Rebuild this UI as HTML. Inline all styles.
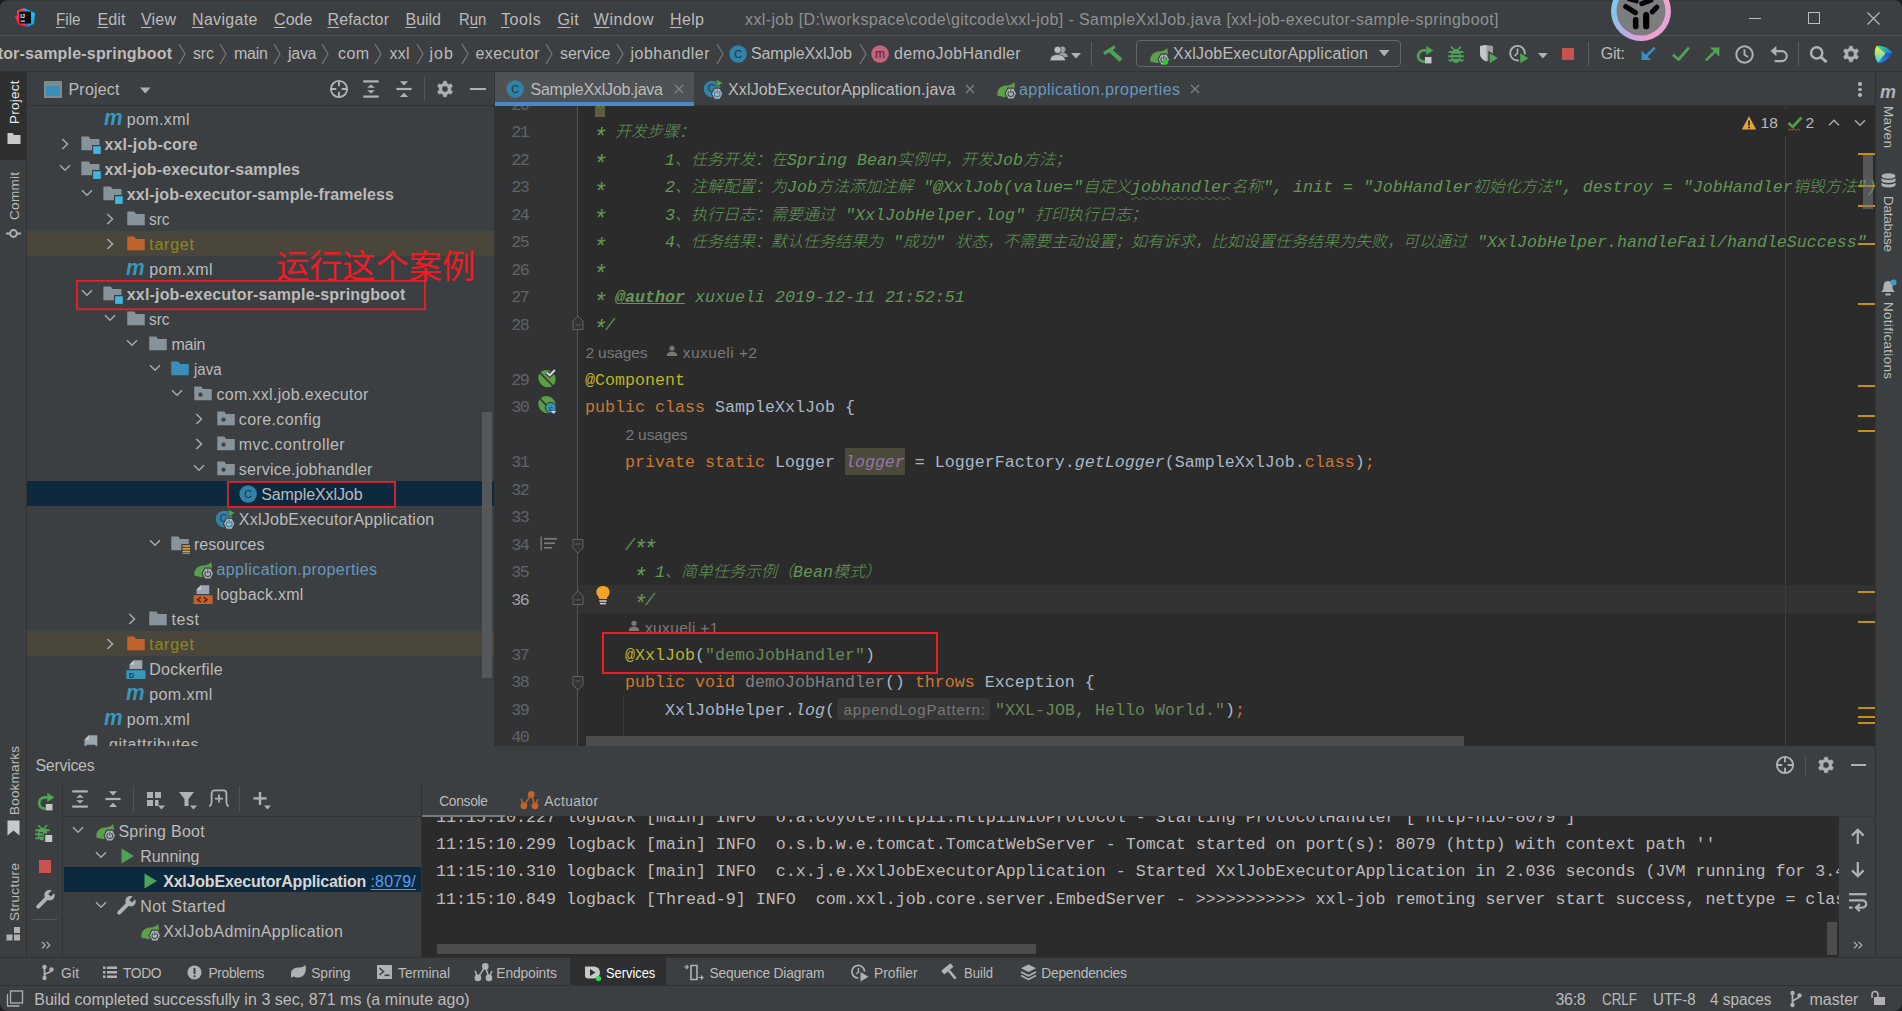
<!DOCTYPE html>
<html lang="en"><head><meta charset="utf-8"><title>xxl-job – SampleXxlJob.java</title>
<style>
html,body{margin:0;padding:0;background:#3c3f41;}
body{width:1902px;height:1011px;position:relative;overflow:hidden;}
body div,body svg,body span.u,body span.m{position:absolute;}
body svg{overflow:visible;}
span.a{display:inline-block;position:relative;top:5.2px;transform:scale(1.38);}
span.u{font-family:"Liberation Sans","Noto Sans CJK SC",sans-serif;white-space:pre;}
span.m{font-family:"Liberation Mono","Noto Sans CJK SC",monospace;white-space:pre;}
span.cj{font-size:16px;font-weight:300;}
.clip{overflow:hidden;}
</style></head>
<body>
<div style="left:495px;top:106px;width:1380px;height:640px;background:#2b2b2b;"></div>
<div style="left:495px;top:106px;width:82px;height:640px;background:#313335;"></div>
<div style="left:577px;top:106px;width:1px;height:640px;background:#555555;"></div>
<div style="left:578px;top:585px;width:1297px;height:27.5px;background:#323232;"></div>
<div style="left:495px;top:585px;width:82px;height:27.5px;background:#313335;"></div>
<div style="left:1785px;top:136px;width:1px;height:610px;background:#3e3e3e;"></div>
<div style="left:1785px;top:106px;width:1px;height:3px;background:#3e3e3e;"></div>
<div style="left:623px;top:695px;width:1px;height:51px;background:#3b3b3b;"></div>
<div style="left:595px;top:90px;width:10px;height:27px;background:#5e5b3e;"></div>
<span class="m" style="left:511.2px;top:91.86px;font-size:16.67px;line-height:27px;color:#606366;letter-spacing:-1.5px;">20</span>
<span class="m" style="left:585px;top:91.86px;font-size:16.67px;line-height:27px;color:#a9b7c6;"><span style="color:#629755;font-style:italic;"> <span class="a">*</span></span></span>
<span class="m" style="left:511.2px;top:119.36px;font-size:16.67px;line-height:27px;color:#606366;letter-spacing:-1.5px;">21</span>
<span class="m" style="left:585px;top:119.36px;font-size:16.67px;line-height:27px;color:#a9b7c6;"><span style="color:#629755;font-style:italic;"> <span class="a">*</span> <span class="cj">开发步骤：</span></span></span>
<span class="m" style="left:511.2px;top:146.86px;font-size:16.67px;line-height:27px;color:#606366;letter-spacing:-1.5px;">22</span>
<span class="m" style="left:585px;top:146.86px;font-size:16.67px;line-height:27px;color:#a9b7c6;"><span style="color:#629755;font-style:italic;"> <span class="a">*</span>      1<span class="cj">、任务开发：在</span>Spring Bean<span class="cj">实例中，开发</span>Job<span class="cj">方法；</span></span></span>
<span class="m" style="left:511.2px;top:174.36px;font-size:16.67px;line-height:27px;color:#606366;letter-spacing:-1.5px;">23</span>
<span class="m" style="left:585px;top:174.36px;font-size:16.67px;line-height:27px;color:#a9b7c6;"><span style="color:#629755;font-style:italic;"> <span class="a">*</span>      2<span class="cj">、注解配置：为</span>Job<span class="cj">方法添加注解</span> "@XxlJob(value="<span class="cj">自定义</span></span><span style="color:#629755;font-style:italic;text-decoration:underline wavy #56704d 1px;text-underline-offset:4px;">jobhandler</span><span style="color:#629755;font-style:italic;"><span class="cj">名称</span>", init = "JobHandler<span class="cj">初始化方法</span>", destroy = "JobHandler<span class="cj">销毁方法</span>")</span></span>
<span class="m" style="left:511.2px;top:201.86px;font-size:16.67px;line-height:27px;color:#606366;letter-spacing:-1.5px;">24</span>
<span class="m" style="left:585px;top:201.86px;font-size:16.67px;line-height:27px;color:#a9b7c6;"><span style="color:#629755;font-style:italic;"> <span class="a">*</span>      3<span class="cj">、执行日志：需要通过</span> "XxlJobHelper.log" <span class="cj">打印执行日志；</span></span></span>
<span class="m" style="left:511.2px;top:229.36px;font-size:16.67px;line-height:27px;color:#606366;letter-spacing:-1.5px;">25</span>
<span class="m" style="left:585px;top:229.36px;font-size:16.67px;line-height:27px;color:#a9b7c6;"><span style="color:#629755;font-style:italic;"> <span class="a">*</span>      4<span class="cj">、任务结果：默认任务结果为</span> "<span class="cj">成功</span>" <span class="cj">状态，不需要主动设置；如有诉求，比如设置任务结果为失败，可以通过</span> "XxlJobHelper.handleFail/handleSuccess"</span></span>
<span class="m" style="left:511.2px;top:256.86px;font-size:16.67px;line-height:27px;color:#606366;letter-spacing:-1.5px;">26</span>
<span class="m" style="left:585px;top:256.86px;font-size:16.67px;line-height:27px;color:#a9b7c6;"><span style="color:#629755;font-style:italic;"> <span class="a">*</span></span></span>
<span class="m" style="left:511.2px;top:284.36px;font-size:16.67px;line-height:27px;color:#606366;letter-spacing:-1.5px;">27</span>
<span class="m" style="left:585px;top:284.36px;font-size:16.67px;line-height:27px;color:#a9b7c6;"><span style="color:#629755;font-style:italic;"> <span class="a">*</span> </span><span style="color:#629755;font-style:italic;font-weight:bold;text-decoration:underline;">@author</span><span style="color:#629755;font-style:italic;"> xuxueli 2019-12-11 21:52:51</span></span>
<span class="m" style="left:511.2px;top:311.86px;font-size:16.67px;line-height:27px;color:#606366;letter-spacing:-1.5px;">28</span>
<span class="m" style="left:585px;top:311.86px;font-size:16.67px;line-height:27px;color:#a9b7c6;"><span style="color:#629755;font-style:italic;"> <span class="a">*</span>/</span></span>
<span class="m" style="left:511.2px;top:366.86px;font-size:16.67px;line-height:27px;color:#606366;letter-spacing:-1.5px;">29</span>
<span class="m" style="left:585px;top:366.86px;font-size:16.67px;line-height:27px;color:#a9b7c6;"><span style="color:#bbb529;">@Component</span></span>
<span class="m" style="left:511.2px;top:394.36px;font-size:16.67px;line-height:27px;color:#606366;letter-spacing:-1.5px;">30</span>
<span class="m" style="left:585px;top:394.36px;font-size:16.67px;line-height:27px;color:#a9b7c6;"><span style="color:#cc7832;">public class </span><span style="color:#a9b7c6;">SampleXxlJob {</span></span>
<div style="left:845px;top:447.5px;width:60px;height:27.5px;background:#4b4a3b;"></div>
<span class="m" style="left:511.2px;top:449.36px;font-size:16.67px;line-height:27px;color:#606366;letter-spacing:-1.5px;">31</span>
<span class="m" style="left:585px;top:449.36px;font-size:16.67px;line-height:27px;color:#a9b7c6;"><span style="color:#cc7832;">    private static </span><span style="color:#a9b7c6;">Logger </span><span style="color:#9876aa;font-style:italic;">logger</span><span style="color:#a9b7c6;"> = LoggerFactory.</span><span style="color:#a9b7c6;font-style:italic;">getLogger</span><span style="color:#a9b7c6;">(SampleXxlJob.</span><span style="color:#cc7832;">class</span><span style="color:#a9b7c6;">)</span><span style="color:#cc7832;">;</span></span>
<span class="m" style="left:511.2px;top:476.86px;font-size:16.67px;line-height:27px;color:#606366;letter-spacing:-1.5px;">32</span>
<span class="m" style="left:511.2px;top:504.36px;font-size:16.67px;line-height:27px;color:#606366;letter-spacing:-1.5px;">33</span>
<span class="m" style="left:511.2px;top:531.86px;font-size:16.67px;line-height:27px;color:#606366;letter-spacing:-1.5px;">34</span>
<span class="m" style="left:585px;top:531.86px;font-size:16.67px;line-height:27px;color:#a9b7c6;"><span style="color:#629755;font-style:italic;">    /<span class="a">*</span><span class="a">*</span></span></span>
<span class="m" style="left:511.2px;top:559.36px;font-size:16.67px;line-height:27px;color:#606366;letter-spacing:-1.5px;">35</span>
<span class="m" style="left:585px;top:559.36px;font-size:16.67px;line-height:27px;color:#a9b7c6;"><span style="color:#629755;font-style:italic;">     <span class="a">*</span> 1<span class="cj">、简单任务示例（</span>Bean<span class="cj">模式）</span></span></span>
<span class="m" style="left:511.2px;top:586.86px;font-size:16.67px;line-height:27px;color:#a4a3a3;letter-spacing:-1.5px;">36</span>
<span class="m" style="left:585px;top:586.86px;font-size:16.67px;line-height:27px;color:#a9b7c6;"><span style="color:#629755;font-style:italic;">     <span class="a">*</span>/</span></span>
<span class="u" style="left:585.4px;top:342.83px;font-size:15.5px;line-height:20px;color:#787878;letter-spacing:-0.103px;">2 usages</span>
<svg style="left:666px;top:344.5px;" width="12" height="12" viewBox="0 0 12 12"><circle cx="6" cy="3.3" r="2.6" fill="#787878"/><path d="M0.8 11 C0.8 7.8 3 6.8 6 6.8 C9 6.8 11.2 7.8 11.2 11 Z" fill="#787878"/></svg>
<span class="u" style="left:682.8px;top:342.83px;font-size:15.5px;line-height:20px;color:#787878;letter-spacing:0.441px;">xuxueli +2</span>
<span class="u" style="left:625.4px;top:425.33px;font-size:15.5px;line-height:20px;color:#787878;letter-spacing:-0.103px;">2 usages</span>
<svg style="left:627.5px;top:619.5px;" width="12" height="12" viewBox="0 0 12 12"><circle cx="6" cy="3.3" r="2.6" fill="#787878"/><path d="M0.8 11 C0.8 7.8 3 6.8 6 6.8 C9 6.8 11.2 7.8 11.2 11 Z" fill="#787878"/></svg>
<span class="u" style="left:645px;top:617.83px;font-size:15.5px;line-height:20px;color:#787878;letter-spacing:0.352px;">xuxueli +1</span>
<svg style="left:602px;top:632px;" width="336" height="42" viewBox="0 0 336 42"><rect x="1.0" y="1.0" width="334" height="40" fill="#2b2b2b" stroke="#ee1c25" stroke-width="2"/></svg>
<span class="m" style="left:511.2px;top:641.86px;font-size:16.67px;line-height:27px;color:#606366;letter-spacing:-1.5px;">37</span>
<span class="m" style="left:585px;top:641.86px;font-size:16.67px;line-height:27px;color:#a9b7c6;"><span style="color:#a9b7c6;">    </span><span style="color:#bbb529;">@XxlJob</span><span style="color:#a9b7c6;">(</span><span style="color:#6a8759;">"demoJobHandler"</span><span style="color:#a9b7c6;">)</span></span>
<span class="m" style="left:511.2px;top:669.36px;font-size:16.67px;line-height:27px;color:#606366;letter-spacing:-1.5px;">38</span>
<span class="m" style="left:585px;top:669.36px;font-size:16.67px;line-height:27px;color:#a9b7c6;"><span style="color:#cc7832;">    public void </span><span style="color:#808080;">demoJobHandler</span><span style="color:#a9b7c6;">() </span><span style="color:#cc7832;">throws </span><span style="color:#a9b7c6;">Exception {</span></span>
<span class="m" style="left:511.2px;top:696.86px;font-size:16.67px;line-height:27px;color:#606366;letter-spacing:-1.5px;">39</span>
<span class="m" style="left:585px;top:696.86px;font-size:16.67px;line-height:27px;color:#a9b7c6;"><span style="color:#a9b7c6;">        XxlJobHelper.</span><span style="color:#a9b7c6;font-style:italic;">log</span><span style="color:#a9b7c6;">(</span></span>
<div style="left:837px;top:698px;width:153px;height:22px;background:#373737;border-radius:4px;"></div>
<span class="u" style="left:843.5px;top:699.60px;font-size:15px;line-height:20px;color:#787878;letter-spacing:0.867px;">appendLogPattern:</span>
<span class="m" style="left:995px;top:696.86px;font-size:16.67px;line-height:27px;color:#a9b7c6;"><span style="color:#6a8759">"XXL-JOB, Hello World."</span>)<span style="color:#cc7832">;</span></span>
<span class="m" style="left:511.2px;top:724.36px;font-size:16.67px;line-height:27px;color:#606366;letter-spacing:-1.5px;">40</span>
<svg style="left:571.5px;top:315px;" width="12" height="16" viewBox="0 0 12 16"><path d="M6 1 L11 6 V14.5 H1 V6 Z" fill="#313335" stroke="#606366" stroke-width="1"/><path d="M3.5 10 H8.5" stroke="#606366" stroke-width="1"/></svg>
<svg style="left:571.5px;top:537.5px;" width="12" height="16" viewBox="0 0 12 16"><path d="M1 1.5 H11 V10 L6 15 L1 10 Z" fill="#313335" stroke="#606366" stroke-width="1"/><path d="M3.5 6 H8.5" stroke="#606366" stroke-width="1"/></svg>
<svg style="left:571.5px;top:589.5px;" width="12" height="16" viewBox="0 0 12 16"><path d="M6 1 L11 6 V14.5 H1 V6 Z" fill="#313335" stroke="#606366" stroke-width="1"/><path d="M3.5 10 H8.5" stroke="#606366" stroke-width="1"/></svg>
<svg style="left:571.5px;top:674.5px;" width="12" height="16" viewBox="0 0 12 16"><path d="M1 1.5 H11 V10 L6 15 L1 10 Z" fill="#313335" stroke="#606366" stroke-width="1"/><path d="M3.5 6 H8.5" stroke="#606366" stroke-width="1"/></svg>
<svg style="left:537px;top:368px;" width="20" height="20" viewBox="0 0 16 16"><ellipse cx="8" cy="8.5" rx="7.2" ry="6.6" transform="rotate(40 8 8.5)" fill="#5b9e45"/><path d="M2.2 3.6 L12.6 14.2" fill="none" stroke="#313335" stroke-width="1.4"/><path d="M7.8 3.6 L10.2 5.8 L14.3 1.6" fill="none" stroke="#313335" stroke-width="3.4"/><path d="M7.8 3.6 L10.2 5.8 L14.3 1.6" fill="none" stroke="#c9d6de" stroke-width="1.7"/></svg>
<svg style="left:537px;top:394.2px;" width="20" height="20" viewBox="0 0 16 16"><ellipse cx="8" cy="8.5" rx="7.2" ry="6.6" transform="rotate(40 8 8.5)" fill="#5b9e45"/><path d="M2.2 3.6 L12.6 14.2" fill="none" stroke="#313335" stroke-width="1.4"/><circle cx="11" cy="11" r="4.3" fill="#3a8fb5" stroke="#313335" stroke-width="0.8"/><text x="11" y="13.2" font-family="Liberation Sans,sans-serif" font-size="6.5" text-anchor="middle" fill="#1e3a49">c</text><path d="M11 13.5 h4.5 l-2.25 2.5 z" fill="#d0d0d0"/></svg>
<svg style="left:540px;top:536px;" width="18" height="16" viewBox="0 0 18 16"><rect x="0.5" y="0.5" width="1.3" height="14" fill="#7a7e80"/><g fill="#7a7e80"><rect x="4" y="2" width="13" height="1.6"/><rect x="4" y="6.5" width="11" height="1.6"/><rect x="4" y="11" width="8" height="1.6"/></g></svg>
<svg style="left:595px;top:585px;" width="16" height="21" viewBox="0 0 16 21"><path d="M8 1 C4 1 1.4 3.8 1.4 7.2 C1.4 9.6 2.8 11 4 12.6 V14 H12 V12.6 C13.2 11 14.6 9.6 14.6 7.2 C14.6 3.8 12 1 8 1 Z" fill="#f2a52a"/><rect x="4.3" y="15.2" width="7.4" height="1.6" fill="#c8c8c8"/><rect x="5" y="17.8" width="6" height="1.6" fill="#c8c8c8"/></svg>
<div style="left:586px;top:736px;width:878px;height:10px;background:#4c4c4c;"></div>
<svg style="left:1741px;top:115px;" width="16" height="16" viewBox="0 0 16 16"><path d="M8 1.2 L15.2 14.5 H0.8 Z" fill="#e2a53a"/><rect x="7.1" y="5.5" width="1.8" height="5" fill="#2b2b2b"/><rect x="7.1" y="11.5" width="1.8" height="1.8" fill="#2b2b2b"/></svg>
<span class="u" style="left:1760.5px;top:113.13px;font-size:15.5px;line-height:20px;color:#bbbbbb;letter-spacing:0.050px;">18</span>
<svg style="left:1787px;top:115px;" width="16" height="18" viewBox="0 0 16 18"><path d="M1.5 8 L5.8 12 L14.5 2.5" fill="none" stroke="#4d9f4a" stroke-width="2.6"/><path d="M1 15.5 l2 -1.6 l2 1.6 l2 -1.6 l2 1.6 l2 -1.6 l2 1.6" fill="none" stroke="#c7403a" stroke-width="1"/></svg>
<span class="u" style="left:1805.5px;top:113.13px;font-size:15.5px;line-height:20px;color:#bbbbbb;">2</span>
<svg style="left:1827.4px;top:117.6px;" width="14" height="10" viewBox="0 0 14 10"><path d="M2 7.3 L7 2.3 L12 7.3" fill="none" stroke="#a8aaac" stroke-width="1.5"/></svg>
<svg style="left:1853.4px;top:117.6px;" width="14" height="10" viewBox="0 0 14 10"><path d="M2 2.3 L7 7.3 L12 2.3" fill="none" stroke="#a8aaac" stroke-width="1.5"/></svg>
<div style="left:1858px;top:153px;width:17px;height:2px;background:#c29217;"></div>
<div style="left:1858px;top:184.5px;width:17px;height:2px;background:#c29217;"></div>
<div style="left:1858px;top:205px;width:17px;height:2px;background:#c29217;"></div>
<div style="left:1858px;top:243px;width:17px;height:2px;background:#c29217;"></div>
<div style="left:1858px;top:303px;width:17px;height:2px;background:#c29217;"></div>
<div style="left:1858px;top:385px;width:17px;height:2px;background:#c29217;"></div>
<div style="left:1858px;top:415px;width:17px;height:2px;background:#c29217;"></div>
<div style="left:1858px;top:429.5px;width:17px;height:2px;background:#c29217;"></div>
<div style="left:1858px;top:590.5px;width:17px;height:2px;background:#c29217;"></div>
<div style="left:1858px;top:620.5px;width:17px;height:2px;background:#c29217;"></div>
<div style="left:1858px;top:706.5px;width:17px;height:2px;background:#c29217;"></div>
<div style="left:1858px;top:716px;width:17px;height:2px;background:#c29217;"></div>
<div style="left:1858px;top:721.5px;width:17px;height:2px;background:#c29217;"></div>
<div style="left:1863px;top:155px;width:10px;height:54px;background:rgba(120,123,125,0.55);"></div>
<div style="left:27px;top:106px;width:467px;height:640px;background:#3c3f41;"></div>
<div style="left:494px;top:72px;width:1px;height:674px;background:#323232;"></div>
<div style="left:27px;top:231px;width:467px;height:25px;background:#4a4639;"></div>
<div style="left:27px;top:631px;width:467px;height:25px;background:#4a4639;"></div>
<div style="left:27px;top:481px;width:467px;height:25px;background:#0d293e;"></div>
<svg style="left:103.8px;top:108.5px;" width="22" height="20" viewBox="0 0 22 20"><text x="0" y="16.4" font-family="Liberation Sans,sans-serif" font-size="22" font-weight="bold" font-style="italic" fill="#3a97ba" textLength="18.6" lengthAdjust="spacingAndGlyphs">m</text></svg>
<span class="u" style="left:126.8px;top:110.16px;font-size:16px;line-height:20px;color:#bbbbbb;letter-spacing:0.374px;">pom.xml</span>
<svg style="left:59.8px;top:136.5px;" width="10" height="14" viewBox="0 0 10 14"><path d="M2.3 2 L7.5 7 L2.3 12" fill="none" stroke="#a8aaac" stroke-width="1.5"/></svg>
<svg style="left:80.80000000000001px;top:133.9px;" width="20" height="20" viewBox="0 0 16 16"><path d="M0.3 2 H6.2 L7.6 4 H14.8 V8.8 H8.8 V13 H0.3 Z" fill="#87939a"/><rect x="9.7" y="9.8" width="6.1" height="6.1" fill="#40b6e0"/></svg>
<span class="u" style="left:104.4px;top:135.16px;font-size:16px;line-height:20px;color:#bbbbbb;font-weight:bold;letter-spacing:0.210px;">xxl-job-core</span>
<svg style="left:57.99999999999999px;top:163.1px;" width="14" height="10" viewBox="0 0 14 10"><path d="M2 2.3 L7 7.3 L12 2.3" fill="none" stroke="#a8aaac" stroke-width="1.5"/></svg>
<svg style="left:80.80000000000001px;top:158.9px;" width="20" height="20" viewBox="0 0 16 16"><path d="M0.3 2 H6.2 L7.6 4 H14.8 V8.8 H8.8 V13 H0.3 Z" fill="#87939a"/><rect x="9.7" y="9.8" width="6.1" height="6.1" fill="#40b6e0"/></svg>
<span class="u" style="left:104.4px;top:160.16px;font-size:16px;line-height:20px;color:#bbbbbb;font-weight:bold;letter-spacing:0.115px;">xxl-job-executor-samples</span>
<svg style="left:80.4px;top:188.1px;" width="14" height="10" viewBox="0 0 14 10"><path d="M2 2.3 L7 7.3 L12 2.3" fill="none" stroke="#a8aaac" stroke-width="1.5"/></svg>
<svg style="left:103.2px;top:183.9px;" width="20" height="20" viewBox="0 0 16 16"><path d="M0.3 2 H6.2 L7.6 4 H14.8 V8.8 H8.8 V13 H0.3 Z" fill="#87939a"/><rect x="9.7" y="9.8" width="6.1" height="6.1" fill="#40b6e0"/></svg>
<span class="u" style="left:126.8px;top:185.16px;font-size:16px;line-height:20px;color:#bbbbbb;font-weight:bold;letter-spacing:0.097px;">xxl-job-executor-sample-frameless</span>
<svg style="left:104.6px;top:211.5px;" width="10" height="14" viewBox="0 0 10 14"><path d="M2.3 2 L7.5 7 L2.3 12" fill="none" stroke="#a8aaac" stroke-width="1.5"/></svg>
<svg style="left:125.6px;top:208.9px;" width="20" height="20" viewBox="0 0 16 16"><path d="M1 2 H6.6 L8 4 H15 V13 H1 Z" fill="#87939a"/></svg>
<span class="u" style="left:149.2px;top:210.16px;font-size:16px;line-height:20px;color:#bbbbbb;transform:scaleX(0.9612);transform-origin:0 0;">src</span>
<svg style="left:104.6px;top:236.5px;" width="10" height="14" viewBox="0 0 10 14"><path d="M2.3 2 L7.5 7 L2.3 12" fill="none" stroke="#a8aaac" stroke-width="1.5"/></svg>
<svg style="left:125.6px;top:233.9px;" width="20" height="20" viewBox="0 0 16 16"><path d="M1 2 H6.6 L8 4 H15 V13 H1 Z" fill="#c2632e"/></svg>
<span class="u" style="left:149.2px;top:235.16px;font-size:16px;line-height:20px;color:#8a8a1c;letter-spacing:0.776px;">target</span>
<svg style="left:126.19999999999999px;top:258.5px;" width="22" height="20" viewBox="0 0 22 20"><text x="0" y="16.4" font-family="Liberation Sans,sans-serif" font-size="22" font-weight="bold" font-style="italic" fill="#3a97ba" textLength="18.6" lengthAdjust="spacingAndGlyphs">m</text></svg>
<span class="u" style="left:149.2px;top:260.16px;font-size:16px;line-height:20px;color:#bbbbbb;letter-spacing:0.491px;">pom.xml</span>
<svg style="left:80.4px;top:288.1px;" width="14" height="10" viewBox="0 0 14 10"><path d="M2 2.3 L7 7.3 L12 2.3" fill="none" stroke="#a8aaac" stroke-width="1.5"/></svg>
<svg style="left:103.2px;top:283.9px;" width="20" height="20" viewBox="0 0 16 16"><path d="M0.3 2 H6.2 L7.6 4 H14.8 V8.8 H8.8 V13 H0.3 Z" fill="#87939a"/><rect x="9.7" y="9.8" width="6.1" height="6.1" fill="#40b6e0"/></svg>
<span class="u" style="left:126.8px;top:285.16px;font-size:16px;line-height:20px;color:#bbbbbb;font-weight:bold;letter-spacing:0.169px;">xxl-job-executor-sample-springboot</span>
<svg style="left:102.8px;top:313.1px;" width="14" height="10" viewBox="0 0 14 10"><path d="M2 2.3 L7 7.3 L12 2.3" fill="none" stroke="#a8aaac" stroke-width="1.5"/></svg>
<svg style="left:125.6px;top:308.9px;" width="20" height="20" viewBox="0 0 16 16"><path d="M1 2 H6.6 L8 4 H15 V13 H1 Z" fill="#87939a"/></svg>
<span class="u" style="left:149.2px;top:310.16px;font-size:16px;line-height:20px;color:#bbbbbb;transform:scaleX(0.9612);transform-origin:0 0;">src</span>
<svg style="left:125.20000000000002px;top:338.1px;" width="14" height="10" viewBox="0 0 14 10"><path d="M2 2.3 L7 7.3 L12 2.3" fill="none" stroke="#a8aaac" stroke-width="1.5"/></svg>
<svg style="left:148.0px;top:333.9px;" width="20" height="20" viewBox="0 0 16 16"><path d="M1 2 H6.6 L8 4 H15 V13 H1 Z" fill="#87939a"/></svg>
<span class="u" style="left:171.6px;top:335.16px;font-size:16px;line-height:20px;color:#bbbbbb;letter-spacing:-0.329px;">main</span>
<svg style="left:147.6px;top:363.1px;" width="14" height="10" viewBox="0 0 14 10"><path d="M2 2.3 L7 7.3 L12 2.3" fill="none" stroke="#a8aaac" stroke-width="1.5"/></svg>
<svg style="left:170.4px;top:358.9px;" width="20" height="20" viewBox="0 0 16 16"><path d="M1 2 H6.6 L8 4 H15 V13 H1 Z" fill="#3a8fb7"/></svg>
<span class="u" style="left:194.0px;top:360.16px;font-size:16px;line-height:20px;color:#bbbbbb;transform:scaleX(0.9401);transform-origin:0 0;">java</span>
<svg style="left:169.99999999999997px;top:388.1px;" width="14" height="10" viewBox="0 0 14 10"><path d="M2 2.3 L7 7.3 L12 2.3" fill="none" stroke="#a8aaac" stroke-width="1.5"/></svg>
<svg style="left:193.39999999999998px;top:383.9px;" width="20" height="20" viewBox="0 0 16 16"><path d="M1 2 H6.6 L8 4 H15 V13 H1 Z" fill="#87939a"/><circle cx="6" cy="8.5" r="1.7" fill="#3c3f41"/></svg>
<span class="u" style="left:216.39999999999998px;top:385.16px;font-size:16px;line-height:20px;color:#bbbbbb;letter-spacing:0.324px;">com.xxl.job.executor</span>
<svg style="left:194.2px;top:411.5px;" width="10" height="14" viewBox="0 0 10 14"><path d="M2.3 2 L7.5 7 L2.3 12" fill="none" stroke="#a8aaac" stroke-width="1.5"/></svg>
<svg style="left:215.79999999999998px;top:408.9px;" width="20" height="20" viewBox="0 0 16 16"><path d="M1 2 H6.6 L8 4 H15 V13 H1 Z" fill="#87939a"/><circle cx="6" cy="8.5" r="1.7" fill="#3c3f41"/></svg>
<span class="u" style="left:238.79999999999998px;top:410.16px;font-size:16px;line-height:20px;color:#bbbbbb;letter-spacing:0.393px;">core.config</span>
<svg style="left:194.2px;top:436.5px;" width="10" height="14" viewBox="0 0 10 14"><path d="M2.3 2 L7.5 7 L2.3 12" fill="none" stroke="#a8aaac" stroke-width="1.5"/></svg>
<svg style="left:215.79999999999998px;top:433.9px;" width="20" height="20" viewBox="0 0 16 16"><path d="M1 2 H6.6 L8 4 H15 V13 H1 Z" fill="#87939a"/><circle cx="6" cy="8.5" r="1.7" fill="#3c3f41"/></svg>
<span class="u" style="left:238.79999999999998px;top:435.16px;font-size:16px;line-height:20px;color:#bbbbbb;letter-spacing:0.486px;">mvc.controller</span>
<svg style="left:192.4px;top:463.1px;" width="14" height="10" viewBox="0 0 14 10"><path d="M2 2.3 L7 7.3 L12 2.3" fill="none" stroke="#a8aaac" stroke-width="1.5"/></svg>
<svg style="left:215.79999999999998px;top:458.9px;" width="20" height="20" viewBox="0 0 16 16"><path d="M1 2 H6.6 L8 4 H15 V13 H1 Z" fill="#87939a"/><circle cx="6" cy="8.5" r="1.7" fill="#3c3f41"/></svg>
<span class="u" style="left:238.79999999999998px;top:460.16px;font-size:16px;line-height:20px;color:#bbbbbb;letter-spacing:0.220px;">service.jobhandler</span>
<svg style="left:237.6px;top:483.9px;" width="20" height="20" viewBox="0 0 16 16"><circle cx="8.1" cy="8" r="7" fill="#3181a8"/><text x="8.2" y="10.9" font-family="Liberation Sans,sans-serif" font-size="8.6" text-anchor="middle" fill="#1c3644">C</text></svg>
<span class="u" style="left:261.2px;top:485.16px;font-size:16px;line-height:20px;color:#bbbbbb;letter-spacing:-0.080px;">SampleXxlJob</span>
<svg style="left:215.2px;top:508.9px;" width="20" height="20" viewBox="0 0 16 16"><circle cx="7.3" cy="8" r="6.7" fill="#3181a8"/><text x="6.6" y="10.6" font-family="Liberation Sans,sans-serif" font-size="8" text-anchor="middle" fill="#1c3644">C</text><path d="M10.6 0.2 L16 3.2 L10.6 6.4 Z" fill="#4fa355" stroke="#3c3f41" stroke-width="0.5"/><polygon points="6.75,11.75 9.05,7.35 13.65,7.35 15.95,11.75 13.65,16.15 9.05,16.15" fill="#aab3ba" stroke="#3c3f41" stroke-width="0.9"/><path d="M10.05 10.05 A2.3 2.3 0 1 0 12.65 10.05" fill="none" stroke="#3181a8" stroke-width="0.9"/><rect x="10.90" y="8.65" width="0.9" height="2.9" fill="#3181a8"/></svg>
<span class="u" style="left:238.79999999999998px;top:510.16px;font-size:16px;line-height:20px;color:#bbbbbb;letter-spacing:0.248px;">XxlJobExecutorApplication</span>
<svg style="left:147.6px;top:538.1px;" width="14" height="10" viewBox="0 0 14 10"><path d="M2 2.3 L7 7.3 L12 2.3" fill="none" stroke="#a8aaac" stroke-width="1.5"/></svg>
<svg style="left:169.5px;top:533.9px;" width="20" height="20" viewBox="0 0 16 16"><path d="M1 2 H6.6 L8 4 H15 V8 H9 V13 H1 Z" fill="#87939a"/><g fill="#d9a343"><rect x="10" y="9" width="6" height="1.3"/><rect x="10" y="11.2" width="6" height="1.3"/><rect x="10" y="13.4" width="6" height="1.3"/><rect x="10" y="15.4" width="6" height="0.6"/></g></svg>
<span class="u" style="left:194.0px;top:535.16px;font-size:16px;line-height:20px;color:#bbbbbb;letter-spacing:0.031px;">resources</span>
<svg style="left:192.79999999999998px;top:558.9px;" width="20" height="20" viewBox="0 0 16 16"><path d="M1.2 13.2 C0.4 9 3 5.3 8 5.1 C11 5 13.2 4.2 14.4 2.3 C15.7 5.5 15.3 9.5 13 12 C10.5 14.7 6 15 3.6 13.5 C3 14 2 14 1.2 13.2 Z" fill="#5c9f49"/><polygon points="7.25,11.65 9.55,7.25 14.15,7.25 16.45,11.65 14.15,16.05 9.55,16.05" fill="#aab3ba" stroke="#3c3f41" stroke-width="0.9"/><path d="M10.55 9.95 A2.3 2.3 0 1 0 13.15 9.95" fill="none" stroke="#43474a" stroke-width="0.9"/><rect x="11.40" y="8.55" width="0.9" height="2.9" fill="#43474a"/></svg>
<span class="u" style="left:216.39999999999998px;top:560.16px;font-size:16px;line-height:20px;color:#6897bb;letter-spacing:0.405px;">application.properties</span>
<svg style="left:192.79999999999998px;top:583.9px;" width="20" height="20" viewBox="0 0 16 16"><path d="M6.3 1 H13 V7.9 H2.8 V4.5 Z" fill="#9aa7b0"/><path d="M2.8 4.5 L6.3 1 V4.5 Z" fill="#c6ccd0"/><rect x="0.5" y="9" width="15.2" height="7" fill="#c4612d"/><path d="M6.3 10.7 L3.6 12.6 L6.3 14.5 M8.6 10.7 L11.3 12.6 L8.6 14.5" fill="none" stroke="#4a2210" stroke-width="1.05"/></svg>
<span class="u" style="left:216.39999999999998px;top:585.16px;font-size:16px;line-height:20px;color:#bbbbbb;letter-spacing:0.252px;">logback.xml</span>
<svg style="left:127.00000000000001px;top:611.5px;" width="10" height="14" viewBox="0 0 10 14"><path d="M2.3 2 L7.5 7 L2.3 12" fill="none" stroke="#a8aaac" stroke-width="1.5"/></svg>
<svg style="left:148.0px;top:608.9px;" width="20" height="20" viewBox="0 0 16 16"><path d="M1 2 H6.6 L8 4 H15 V13 H1 Z" fill="#87939a"/></svg>
<span class="u" style="left:171.6px;top:610.16px;font-size:16px;line-height:20px;color:#bbbbbb;letter-spacing:0.534px;">test</span>
<svg style="left:104.6px;top:636.5px;" width="10" height="14" viewBox="0 0 10 14"><path d="M2.3 2 L7.5 7 L2.3 12" fill="none" stroke="#a8aaac" stroke-width="1.5"/></svg>
<svg style="left:125.6px;top:633.9px;" width="20" height="20" viewBox="0 0 16 16"><path d="M1 2 H6.6 L8 4 H15 V13 H1 Z" fill="#c2632e"/></svg>
<span class="u" style="left:149.2px;top:635.16px;font-size:16px;line-height:20px;color:#8a8a1c;letter-spacing:0.776px;">target</span>
<svg style="left:125.6px;top:658.9px;" width="20" height="20" viewBox="0 0 16 16"><path d="M6.3 1 H13 V7.9 H2.8 V4.5 Z" fill="#9aa7b0"/><path d="M2.8 4.5 L6.3 1 V4.5 Z" fill="#c6ccd0"/><rect x="0.3" y="9" width="15.3" height="7" fill="#3a97ba"/><text x="2.4" y="15" font-family="Liberation Sans,sans-serif" font-size="6" font-weight="bold" fill="#173a4a">D</text></svg>
<span class="u" style="left:149.2px;top:660.16px;font-size:16px;line-height:20px;color:#bbbbbb;letter-spacing:0.251px;">Dockerfile</span>
<svg style="left:126.19999999999999px;top:683.5px;" width="22" height="20" viewBox="0 0 22 20"><text x="0" y="16.4" font-family="Liberation Sans,sans-serif" font-size="22" font-weight="bold" font-style="italic" fill="#3a97ba" textLength="18.6" lengthAdjust="spacingAndGlyphs">m</text></svg>
<span class="u" style="left:149.2px;top:685.16px;font-size:16px;line-height:20px;color:#bbbbbb;letter-spacing:0.441px;">pom.xml</span>
<svg style="left:103.8px;top:708.5px;" width="22" height="20" viewBox="0 0 22 20"><text x="0" y="16.4" font-family="Liberation Sans,sans-serif" font-size="22" font-weight="bold" font-style="italic" fill="#3a97ba" textLength="18.6" lengthAdjust="spacingAndGlyphs">m</text></svg>
<span class="u" style="left:126.8px;top:710.16px;font-size:16px;line-height:20px;color:#bbbbbb;letter-spacing:0.424px;">pom.xml</span>
<svg style="left:80.80000000000001px;top:733.9px;" width="20" height="20" viewBox="0 0 16 16"><path d="M6.3 1 H13 V15 H2.8 V4.5 Z" fill="#9aa7b0"/><path d="M2.8 4.5 L6.3 1 V4.5 Z" fill="#c6ccd0"/><g fill="#3c3f41"><rect x="4.3" y="8.6" width="7.2" height="1.1"/><rect x="4.3" y="11" width="7.2" height="1.1"/></g></svg>
<span class="u" style="left:104px;top:735.16px;font-size:16px;line-height:20px;color:#bbbbbb;letter-spacing:0.557px;">.gitattributes</span>
<div style="left:482px;top:412px;width:10px;height:266px;background:#55585a;"></div>
<svg style="left:76px;top:280.4px;" width="350" height="30.2" viewBox="0 0 350 30.2"><rect x="0.9" y="0.9" width="348.2" height="28.4" fill="none" stroke="#ee1c25" stroke-width="1.8"/></svg>
<svg style="left:227px;top:481.2px;" width="169" height="26.8" viewBox="0 0 169 26.8"><rect x="0.9" y="0.9" width="167.2" height="25.0" fill="none" stroke="#ee1c25" stroke-width="1.8"/></svg>
<span class="u" style="left:276px;top:247.10px;font-size:33.2px;line-height:40px;color:#ee1c25;">运行这个案例</span>
<div style="left:27px;top:72px;width:467px;height:33px;background:#3c3f41;"></div>
<div style="left:27px;top:105px;width:467px;height:1px;background:#323232;"></div>
<svg style="left:44px;top:81px;" width="18" height="17" viewBox="0 0 18 17"><rect x="0" y="0" width="18" height="17" fill="#7f8b91"/><rect x="2" y="5" width="14" height="10" fill="#3a8fb7"/></svg>
<span class="u" style="left:68.5px;top:79.76px;font-size:16px;line-height:20px;color:#bbbbbb;letter-spacing:0.201px;">Project</span>
<svg style="left:140px;top:87px;" width="11" height="7" viewBox="0 0 11 7"><path d="M0 0.5 H10.5 L5.25 6.5 Z" fill="#afb1b3"/></svg>
<svg style="left:329px;top:79px;" width="20" height="20" viewBox="0 0 20 20"><circle cx="10" cy="10" r="8.1" fill="none" stroke="#afb1b3" stroke-width="1.9"/><path d="M10 2 V7.3 M10 12.7 V18 M2 10 H7.3 M12.7 10 H18" stroke="#afb1b3" stroke-width="1.9"/></svg>
<svg style="left:362px;top:79px;" width="18" height="20" viewBox="0 0 18 20"><rect x="1.2" y="1.3" width="15.6" height="2.2" fill="#afb1b3"/><rect x="1.2" y="16.5" width="15.6" height="2.2" fill="#afb1b3"/><path d="M9 5.6 L12.9 8.7 H5.1 Z M9 14.4 L12.9 11.3 H5.1 Z" fill="#afb1b3"/></svg>
<svg style="left:395px;top:79px;" width="18" height="20" viewBox="0 0 18 20"><rect x="1.4" y="8.9" width="15.2" height="2.2" fill="#afb1b3"/><path d="M9 6.4 L13.1 2.3 H4.9 Z M9 13.8 L13.1 17.9 H4.9 Z" fill="#afb1b3"/></svg>
<div style="left:424px;top:77px;width:1px;height:23.5px;background:#555555;"></div>
<svg style="left:435px;top:79px;" width="20" height="20" viewBox="0 0 20 20"><g transform="translate(10,10)"><path d="M-1.74,-5.64 L-1.49,-7.76 L1.49,-7.76 L1.74,-5.64 L4.01,-4.33 L5.97,-5.17 L7.46,-2.59 L5.75,-1.31 L5.75,1.31 L7.46,2.59 L5.97,5.17 L4.01,4.33 L1.74,5.64 L1.49,7.76 L-1.49,7.76 L-1.74,5.64 L-4.01,4.33 L-5.97,5.17 L-7.46,2.59 L-5.75,1.31 L-5.75,-1.31 L-7.46,-2.59 L-5.97,-5.17 L-4.01,-4.33 Z M3.2 0 A3.2 3.2 0 1 0 -3.2 0 A3.2 3.2 0 1 0 3.2 0 Z" fill="#afb1b3" fill-rule="evenodd" stroke="#afb1b3" stroke-width="0.6" stroke-linejoin="round"/></g></svg>
<div style="left:470.4px;top:88px;width:15.3px;height:2px;background:#afb1b3;"></div>
<div style="left:495px;top:72px;width:1380px;height:34px;background:#3c3f41;"></div>
<div style="left:495px;top:105px;width:1380px;height:1px;background:#323232;"></div>
<div style="left:495px;top:72px;width:199px;height:30px;background:#4e5254;"></div>
<div style="left:495px;top:102px;width:199px;height:4px;background:#4a88c7;"></div>
<div style="left:0px;top:71px;width:1902px;height:1px;background:#2d2f30;"></div>
<svg style="left:504.9px;top:79.4px;" width="20" height="20" viewBox="0 0 16 16"><circle cx="8.1" cy="8" r="7" fill="#3181a8"/><text x="8.2" y="10.9" font-family="Liberation Sans,sans-serif" font-size="8.6" text-anchor="middle" fill="#1c3644">C</text></svg>
<span class="u" style="left:530.5px;top:79.76px;font-size:16px;line-height:20px;color:#bbbbbb;letter-spacing:-0.224px;">SampleXxlJob.java</span>
<svg style="left:674px;top:84px;" width="10" height="10" viewBox="0 0 10 10"><path d="M1 1 L9 9 M9 1 L1 9" stroke="#7f8385" stroke-width="1.2"/></svg>
<svg style="left:702.9px;top:79.4px;" width="20" height="20" viewBox="0 0 16 16"><circle cx="7.3" cy="8" r="6.7" fill="#3181a8"/><text x="6.6" y="10.6" font-family="Liberation Sans,sans-serif" font-size="8" text-anchor="middle" fill="#1c3644">C</text><path d="M10.6 0.2 L16 3.2 L10.6 6.4 Z" fill="#4fa355" stroke="#3c3f41" stroke-width="0.5"/><polygon points="6.75,11.75 9.05,7.35 13.65,7.35 15.95,11.75 13.65,16.15 9.05,16.15" fill="#aab3ba" stroke="#3c3f41" stroke-width="0.9"/><path d="M10.05 10.05 A2.3 2.3 0 1 0 12.65 10.05" fill="none" stroke="#3181a8" stroke-width="0.9"/><rect x="10.90" y="8.65" width="0.9" height="2.9" fill="#3181a8"/></svg>
<span class="u" style="left:728px;top:79.76px;font-size:16px;line-height:20px;color:#bbbbbb;letter-spacing:0.147px;">XxlJobExecutorApplication.java</span>
<svg style="left:965px;top:84px;" width="10" height="10" viewBox="0 0 10 10"><path d="M1 1 L9 9 M9 1 L1 9" stroke="#7f8385" stroke-width="1.2"/></svg>
<svg style="left:995.6999999999999px;top:79.4px;" width="20" height="20" viewBox="0 0 16 16"><path d="M1.2 13.2 C0.4 9 3 5.3 8 5.1 C11 5 13.2 4.2 14.4 2.3 C15.7 5.5 15.3 9.5 13 12 C10.5 14.7 6 15 3.6 13.5 C3 14 2 14 1.2 13.2 Z" fill="#5c9f49"/><polygon points="7.25,11.65 9.55,7.25 14.15,7.25 16.45,11.65 14.15,16.05 9.55,16.05" fill="#aab3ba" stroke="#3c3f41" stroke-width="0.9"/><path d="M10.55 9.95 A2.3 2.3 0 1 0 13.15 9.95" fill="none" stroke="#43474a" stroke-width="0.9"/><rect x="11.40" y="8.55" width="0.9" height="2.9" fill="#43474a"/></svg>
<span class="u" style="left:1019px;top:79.76px;font-size:16px;line-height:20px;color:#6897bb;letter-spacing:0.424px;">application.properties</span>
<svg style="left:1190px;top:84px;" width="10" height="10" viewBox="0 0 10 10"><path d="M1 1 L9 9 M9 1 L1 9" stroke="#7f8385" stroke-width="1.2"/></svg>
<div style="left:1858.3px;top:82.3px;width:3.4px;height:3.4px;background:#afb1b3;border-radius:50%"></div>
<div style="left:1858.3px;top:87.8px;width:3.4px;height:3.4px;background:#afb1b3;border-radius:50%"></div>
<div style="left:1858.3px;top:93.3px;width:3.4px;height:3.4px;background:#afb1b3;border-radius:50%"></div>
<div style="left:27px;top:746px;width:1848px;height:211px;background:#3c3f41;"></div>
<span class="u" style="left:35.5px;top:756.06px;font-size:16px;line-height:20px;color:#bbbbbb;letter-spacing:-0.308px;">Services</span>
<svg style="left:1775.2px;top:755.3px;" width="20" height="20" viewBox="0 0 20 20"><circle cx="10" cy="10" r="8.1" fill="none" stroke="#afb1b3" stroke-width="1.9"/><path d="M10 2 V7.3 M10 12.7 V18 M2 10 H7.3 M12.7 10 H18" stroke="#afb1b3" stroke-width="1.9"/></svg>
<div style="left:1805px;top:755px;width:1px;height:22px;background:#515151;"></div>
<svg style="left:1816px;top:755.3px;" width="20" height="20" viewBox="0 0 20 20"><g transform="translate(10,10)"><path d="M-1.74,-5.64 L-1.49,-7.76 L1.49,-7.76 L1.74,-5.64 L4.01,-4.33 L5.97,-5.17 L7.46,-2.59 L5.75,-1.31 L5.75,1.31 L7.46,2.59 L5.97,5.17 L4.01,4.33 L1.74,5.64 L1.49,7.76 L-1.49,7.76 L-1.74,5.64 L-4.01,4.33 L-5.97,5.17 L-7.46,2.59 L-5.75,1.31 L-5.75,-1.31 L-7.46,-2.59 L-5.97,-5.17 L-4.01,-4.33 Z M3.2 0 A3.2 3.2 0 1 0 -3.2 0 A3.2 3.2 0 1 0 3.2 0 Z" fill="#afb1b3" fill-rule="evenodd" stroke="#afb1b3" stroke-width="0.6" stroke-linejoin="round"/></g></svg>
<div style="left:1850.6px;top:764.3px;width:15.8px;height:2px;background:#afb1b3;"></div>
<div style="left:62px;top:783px;width:1px;height:174px;background:#323232;"></div>
<svg style="left:35.5px;top:791px;" width="21" height="21" viewBox="0 0 21 21"><path d="M9.8 17.6 H8.7 A5.6 5.6 0 0 1 8.7 6.4 H11.5" fill="none" stroke="#4fa355" stroke-width="2.6"/><path d="M11.3 1.8 L18.3 6.5 L11.3 11.1 Z" fill="#4fa355"/><rect x="9.9" y="13" width="6.6" height="6.4" fill="#c4c6c7"/></svg>
<svg style="left:34px;top:823px;" width="22" height="22" viewBox="0 0 22 22"><ellipse cx="8.6" cy="11" rx="4.8" ry="6.6" fill="#4fa355"/><path d="M4.2 2.2 L6.8 5 M13 2.2 L10.4 5" stroke="#4fa355" stroke-width="1.6"/><path d="M1.4 7.2 H5 M1 11.2 H5 M1.4 15.2 H5 M12 7.2 H15.6" stroke="#4fa355" stroke-width="2.1"/><path d="M5.4 9.6 H9 M5.4 13 H9" stroke="#3c3f41" stroke-width="1.2"/><rect x="9.6" y="10.4" width="11" height="10.4" fill="#3c3f41"/><rect x="11.2" y="12" width="7" height="7" fill="#c4c6c7"/></svg>
<div style="left:38.7px;top:860px;width:12.6px;height:12.6px;background:#c75450;"></div>
<svg style="left:35px;top:888.5px;" width="21" height="21" viewBox="0 0 21 21"><path d="M19.2 4.2 L15.8 7.6 L13.2 5 L16.6 1.6 C14.4 0.6 11.8 1.2 10.4 3 C9.2 4.6 9.2 6.6 9.8 8.2 L1.6 16.4 A2 2 0 0 0 4.4 19.2 L12.6 11 C14.2 11.6 16.2 11.6 17.8 10.4 C19.6 9 20.2 6.4 19.2 4.2 Z" fill="#afb1b3"/></svg>
<div style="left:33px;top:919px;width:24px;height:1px;background:#555758;"></div>
<svg style="left:41px;top:940.6px;" width="10" height="9" viewBox="0 0 10 9"><path d="M1 1 L4.2 4.2 L1 7.4 M5.6 1 L8.8 4.2 L5.6 7.4" fill="none" stroke="#afb1b3" stroke-width="1.2"/></svg>
<svg style="left:71px;top:789px;" width="18" height="20" viewBox="0 0 18 20"><rect x="1.2" y="1.3" width="15.6" height="2.2" fill="#afb1b3"/><rect x="1.2" y="16.5" width="15.6" height="2.2" fill="#afb1b3"/><path d="M9 5.6 L12.9 8.7 H5.1 Z M9 14.4 L12.9 11.3 H5.1 Z" fill="#afb1b3"/></svg>
<svg style="left:104px;top:789px;" width="18" height="20" viewBox="0 0 18 20"><rect x="1.4" y="8.9" width="15.2" height="2.2" fill="#afb1b3"/><path d="M9 6.4 L13.1 2.3 H4.9 Z M9 13.8 L13.1 17.9 H4.9 Z" fill="#afb1b3"/></svg>
<div style="left:133px;top:786px;width:1px;height:26px;background:#515151;"></div>
<svg style="left:146px;top:790px;" width="20" height="21" viewBox="0 0 20 21"><g fill="#afb1b3"><rect x="1" y="2" width="6" height="6"/><rect x="9" y="2" width="6" height="6"/><rect x="1" y="10" width="6" height="6"/><rect x="9" y="10" width="3.5" height="6"/><path d="M12 15.5 H19 L15.5 19.5 Z"/></g></svg>
<svg style="left:178px;top:790px;" width="20" height="21" viewBox="0 0 20 21"><g fill="#afb1b3"><path d="M1 2 H16 L10.5 9 V16 H6.5 V9 Z"/><path d="M12 15.5 H19 L15.5 19.5 Z"/></g></svg>
<svg style="left:208px;top:788px;" width="22" height="22" viewBox="0 0 22 22"><path d="M1.4 18.6 C2.8 17.6 3.6 16.4 3.6 14 V5.4 A3 3 0 0 1 6.6 2.4 H15.4 A3 3 0 0 1 18.4 5.4 V14 C18.4 16.4 19.2 17.6 20.6 18.6" fill="none" stroke="#afb1b3" stroke-width="1.8"/><path d="M11 6.6 V14.6 M7 10.6 H15" stroke="#afb1b3" stroke-width="1.8"/></svg>
<div style="left:239px;top:786px;width:1px;height:26px;background:#515151;"></div>
<svg style="left:252px;top:790px;" width="20" height="21" viewBox="0 0 20 21"><g fill="#afb1b3"><rect x="1.5" y="7.2" width="13" height="2.4"/><rect x="6.8" y="2" width="2.4" height="13"/><path d="M12 15.5 H19 L15.5 19.5 Z"/></g></svg>
<div style="left:63px;top:816px;width:358px;height:1px;background:#323232;"></div>
<div style="left:421px;top:783px;width:1px;height:174px;background:#323232;"></div>
<div style="left:64px;top:867px;width:357px;height:25px;background:#0d293e;"></div>
<svg style="left:71.0px;top:825.1px;" width="14" height="10" viewBox="0 0 14 10"><path d="M2 2.3 L7 7.3 L12 2.3" fill="none" stroke="#a8aaac" stroke-width="1.5"/></svg>
<svg style="left:94.9px;top:820.9px;" width="20" height="20" viewBox="0 0 16 16"><path d="M1.2 13.2 C0.4 9 3 5.3 8 5.1 C11 5 13.2 4.2 14.4 2.3 C15.7 5.5 15.3 9.5 13 12 C10.5 14.7 6 15 3.6 13.5 C3 14 2 14 1.2 13.2 Z" fill="#5c9f49"/><polygon points="7.25,11.65 9.55,7.25 14.15,7.25 16.45,11.65 14.15,16.05 9.55,16.05" fill="#aab3ba" stroke="#3c3f41" stroke-width="0.9"/><path d="M10.55 9.95 A2.3 2.3 0 1 0 13.15 9.95" fill="none" stroke="#43474a" stroke-width="0.9"/><rect x="11.40" y="8.55" width="0.9" height="2.9" fill="#43474a"/></svg>
<span class="u" style="left:118.4px;top:821.76px;font-size:16px;line-height:20px;color:#bbbbbb;letter-spacing:0.269px;">Spring Boot</span>
<svg style="left:93.9px;top:850.1px;" width="14" height="10" viewBox="0 0 14 10"><path d="M2 2.3 L7 7.3 L12 2.3" fill="none" stroke="#a8aaac" stroke-width="1.5"/></svg>
<svg style="left:120.5px;top:847.5px;" width="14" height="16" viewBox="0 0 14 16"><path d="M0.5 0.5 L13 8 L0.5 15.5 Z" fill="#4fa355"/></svg>
<span class="u" style="left:140.3px;top:846.76px;font-size:16px;line-height:20px;color:#bbbbbb;letter-spacing:-0.068px;">Running</span>
<svg style="left:143.5px;top:872.5px;" width="14" height="16" viewBox="0 0 14 16"><path d="M0.5 0.5 L13 8 L0.5 15.5 Z" fill="#4fa355"/></svg>
<span class="u" style="left:163.2px;top:871.76px;font-size:16px;line-height:20px;color:#d6d6d6;font-weight:bold;letter-spacing:-0.206px;">XxlJobExecutorApplication</span>
<span class="u" style="left:370.5px;top:871.76px;font-size:16px;line-height:20px;color:#589df6;letter-spacing:0.163px;text-decoration:underline;text-underline-offset:2px;">:8079/</span>
<svg style="left:93.9px;top:900.1px;" width="14" height="10" viewBox="0 0 14 10"><path d="M2 2.3 L7 7.3 L12 2.3" fill="none" stroke="#a8aaac" stroke-width="1.5"/></svg>
<svg style="left:116px;top:895px;" width="21" height="21" viewBox="0 0 21 21"><path d="M19.2 4.2 L15.8 7.6 L13.2 5 L16.6 1.6 C14.4 0.6 11.8 1.2 10.4 3 C9.2 4.6 9.2 6.6 9.8 8.2 L1.6 16.4 A2 2 0 0 0 4.4 19.2 L12.6 11 C14.2 11.6 16.2 11.6 17.8 10.4 C19.6 9 20.2 6.4 19.2 4.2 Z" fill="#afb1b3"/></svg>
<span class="u" style="left:140.3px;top:896.76px;font-size:16px;line-height:20px;color:#bbbbbb;letter-spacing:0.426px;">Not Started</span>
<svg style="left:139.9px;top:920.9px;" width="20" height="20" viewBox="0 0 16 16"><path d="M1.2 13.2 C0.4 9 3 5.3 8 5.1 C11 5 13.2 4.2 14.4 2.3 C15.7 5.5 15.3 9.5 13 12 C10.5 14.7 6 15 3.6 13.5 C3 14 2 14 1.2 13.2 Z" fill="#5c9f49"/><polygon points="7.25,11.65 9.55,7.25 14.15,7.25 16.45,11.65 14.15,16.05 9.55,16.05" fill="#aab3ba" stroke="#3c3f41" stroke-width="0.9"/><path d="M10.55 9.95 A2.3 2.3 0 1 0 13.15 9.95" fill="none" stroke="#43474a" stroke-width="0.9"/><rect x="11.40" y="8.55" width="0.9" height="2.9" fill="#43474a"/></svg>
<span class="u" style="left:163.2px;top:921.76px;font-size:16px;line-height:20px;color:#bbbbbb;letter-spacing:0.383px;">XxlJobAdminApplication</span>
<div style="left:422px;top:816px;width:1417px;height:141px;background:#2b2b2b;"></div>
<span class="m" style="left:436px;top:803.56px;font-size:16.67px;line-height:27px;color:#bbbbbb;">11:15:10.227 logback [main] INFO  o.a.coyote.http11.Http11NioProtocol - Starting ProtocolHandler ["http-nio-8079"]</span>
<span class="m" style="left:436px;top:831.06px;font-size:16.67px;line-height:27px;color:#bbbbbb;">11:15:10.299 logback [main] INFO  o.s.b.w.e.tomcat.TomcatWebServer - Tomcat started on port(s): 8079 (http) with context path ''</span>
<span class="m" style="left:436px;top:858.06px;font-size:16.67px;line-height:27px;color:#bbbbbb;">11:15:10.310 logback [main] INFO  c.x.j.e.XxlJobExecutorApplication - Started XxlJobExecutorApplication in 2.036 seconds (JVM running for 3.47</span>
<span class="m" style="left:436px;top:885.56px;font-size:16.67px;line-height:27px;color:#bbbbbb;">11:15:10.849 logback [Thread-9] INFO  com.xxl.job.core.server.EmbedServer - &gt;&gt;&gt;&gt;&gt;&gt;&gt;&gt;&gt;&gt;&gt; xxl-job remoting server start success, nettype = class</span>
<div style="left:437px;top:944px;width:599px;height:10px;background:#4c4c4c;"></div>
<div style="left:1827px;top:922px;width:10px;height:33px;background:#4c4c4c;"></div>
<div style="left:422px;top:783px;width:1417px;height:33px;background:#3c3f41;"></div>
<div style="left:422px;top:814.6px;width:82.7px;height:2.2px;background:#767a7d;"></div>
<span class="u" style="left:439.2px;top:792.02px;font-size:13.8px;line-height:20px;color:#bbbbbb;letter-spacing:-0.304px;">Console</span>
<svg style="left:519.5px;top:791px;" width="19" height="20" viewBox="0 0 19 20"><path d="M1.1 7.7 L3.8 14.8 L11.3 3.3 L15 14.8 L17.9 8" fill="none" stroke="#c2622f" stroke-width="1.5" stroke-linejoin="round"/><circle cx="11.3" cy="3.4" r="3.3" fill="#c2622f"/><circle cx="3.9" cy="14.9" r="3.3" fill="#c2622f"/><circle cx="15" cy="14.9" r="3.3" fill="#c2622f"/></svg>
<span class="u" style="left:544.2px;top:792.02px;font-size:13.8px;line-height:20px;color:#bbbbbb;letter-spacing:0.344px;">Actuator</span>
<div style="left:1839px;top:783px;width:36px;height:174px;background:#3c3f41;"></div>
<div style="left:1839px;top:816px;width:36px;height:1px;background:#35383a;"></div>
<svg style="left:1848px;top:826px;" width="20" height="21" viewBox="0 0 20 21"><path d="M9.8 18 V4 M4 9.6 L9.8 3.8 L15.6 9.6" fill="none" stroke="#afb1b3" stroke-width="2.3"/></svg>
<svg style="left:1848px;top:859px;" width="20" height="21" viewBox="0 0 20 21"><path d="M9.8 3 V17 M4 11.4 L9.8 17.2 L15.6 11.4" fill="none" stroke="#afb1b3" stroke-width="2.3"/></svg>
<svg style="left:1847px;top:891px;" width="22" height="21" viewBox="0 0 22 21"><path d="M2 3.2 H19.6" stroke="#afb1b3" stroke-width="2.2"/><path d="M2 9.4 H15.6 A3.6 3.6 0 0 1 15.6 16.6 H10" fill="none" stroke="#afb1b3" stroke-width="2.2"/><path d="M12.8 13 L9 16.6 L12.8 20.2" fill="none" stroke="#afb1b3" stroke-width="2.2"/><rect x="2" y="15.5" width="3.6" height="2.2" fill="#afb1b3"/></svg>
<svg style="left:1853px;top:940.6px;" width="10" height="9" viewBox="0 0 10 9"><path d="M1 1 L4.2 4.2 L1 7.4 M5.6 1 L8.8 4.2 L5.6 7.4" fill="none" stroke="#afb1b3" stroke-width="1.2"/></svg>
<div style="left:0px;top:72px;width:27px;height:885px;background:#3c3f41;"></div>
<div style="left:26px;top:72px;width:1px;height:885px;background:#323232;"></div>
<div style="left:0px;top:72px;width:26px;height:88px;background:#2d2f30;"></div>
<span class="u" style="left:5.1px;top:124.20px;font-size:13.5px;line-height:20px;color:#e8e8e8;letter-spacing:0.245px;transform:rotate(-90deg);transform-origin:0 0;">Project</span>
<svg style="left:7px;top:132.5px;" width="14" height="11" viewBox="0 0 14 11"><path d="M0.5 0 H5.5 L7 2 H13.5 V11 H0.5 Z" fill="#c7c9ca"/></svg>
<span class="u" style="left:5.1px;top:219.70px;font-size:13.5px;line-height:20px;color:#bbbbbb;letter-spacing:0.320px;transform:rotate(-90deg);transform-origin:0 0;">Commit</span>
<svg style="left:5px;top:226px;transform:rotate(90deg);" width="17" height="15" viewBox="0 0 17 15"><circle cx="8.5" cy="7.5" r="3.4" fill="none" stroke="#afb1b3" stroke-width="2"/><path d="M8.5 0 V4 M8.5 11 V15" stroke="#afb1b3" stroke-width="2"/></svg>
<span class="u" style="left:5.1px;top:815.00px;font-size:13.5px;line-height:20px;color:#bbbbbb;letter-spacing:0.184px;transform:rotate(-90deg);transform-origin:0 0;">Bookmarks</span>
<svg style="left:7px;top:820px;" width="13" height="16" viewBox="0 0 13 16"><path d="M0.5 0.5 H12.5 V15.5 L6.5 10.5 L0.5 15.5 Z" fill="#c7c9ca"/></svg>
<span class="u" style="left:5.1px;top:921.00px;font-size:13.5px;line-height:20px;color:#bbbbbb;letter-spacing:0.402px;transform:rotate(-90deg);transform-origin:0 0;">Structure</span>
<svg style="left:6px;top:927px;" width="15" height="14" viewBox="0 0 15 14"><rect x="8" y="0" width="6" height="6" fill="#afb1b3"/><rect x="0.5" y="7.5" width="6" height="6" fill="#afb1b3"/><rect x="8" y="7.5" width="6" height="6" fill="#afb1b3"/></svg>
<div style="left:1875px;top:72px;width:27px;height:885px;background:#3c3f41;"></div>
<div style="left:1875px;top:72px;width:1px;height:885px;background:#323232;"></div>
<svg style="left:1880px;top:84px;" width="18" height="16" viewBox="0 0 18 16"><text x="0" y="14" font-family="Liberation Sans,sans-serif" font-size="19" font-weight="bold" font-style="italic" fill="#afb1b3" textLength="16" lengthAdjust="spacingAndGlyphs">m</text></svg>
<span class="u" style="left:1898px;top:106.00px;font-size:13.5px;line-height:20px;color:#bbbbbb;letter-spacing:0.367px;transform:rotate(90deg);transform-origin:0 0;">Maven</span>
<svg style="left:1881px;top:173px;" width="15" height="17" viewBox="0 0 15 17"><g fill="#afb1b3"><ellipse cx="7.5" cy="3" rx="7" ry="2.8"/><path d="M0.5 5 C2 7.5 13 7.5 14.5 5 V8 C13 10.5 2 10.5 0.5 8 Z"/><path d="M0.5 9.5 C2 12 13 12 14.5 9.5 V12.5 C13 15 2 15 0.5 12.5 Z"/></g></svg>
<span class="u" style="left:1898px;top:196.00px;font-size:13.5px;line-height:20px;color:#bbbbbb;letter-spacing:-0.257px;transform:rotate(90deg);transform-origin:0 0;">Database</span>
<svg style="left:1880px;top:279px;" width="17" height="18" viewBox="0 0 17 18"><path d="M8 2 C4.5 2 3.5 5 3.5 8 C3.5 11 2 12 1 13 H15 C14 12 12.5 11 12.5 8 C12.5 5 11.5 2 8 2 Z" fill="#afb1b3"/><rect x="5.5" y="14.5" width="5" height="2" fill="#afb1b3"/><circle cx="13.5" cy="3.5" r="3" fill="#3a9cd6"/></svg>
<span class="u" style="left:1898px;top:302.00px;font-size:13.5px;line-height:20px;color:#bbbbbb;letter-spacing:0.288px;transform:rotate(90deg);transform-origin:0 0;">Notifications</span>
<div style="left:0px;top:0px;width:1902px;height:72px;background:#3c3f41;"></div>
<div style="left:0px;top:35px;width:1902px;height:1px;background:#515151;"></div>
<div style="left:0px;top:0px;width:1902px;height:1px;background:#353739;"></div>
<div style="left:0px;top:71px;width:1902px;height:1px;background:#323232;"></div>
<svg style="left:15px;top:7px;" width="22" height="22" viewBox="0 0 22 22"><defs><linearGradient id="ijg1" x1="0" y1="0" x2="1" y2="1"><stop offset="0" stop-color="#fc801d"/><stop offset="0.45" stop-color="#fe2857"/><stop offset="1" stop-color="#7b3ff2"/></linearGradient><linearGradient id="ijg2" x1="0" y1="1" x2="1" y2="0"><stop offset="0" stop-color="#087cfa"/><stop offset="1" stop-color="#21d0f5"/></linearGradient></defs><path d="M2 4 L9 1 L14 10 L4 15 Z" fill="url(#ijg1)"/><path d="M9 1 L20 6 L19 17 L12 20 Z" fill="url(#ijg2)"/><path d="M0 9 L6 7 L12 20 L3 17 Z" fill="#fe2857"/><rect x="4" y="4.5" width="12" height="12" fill="#0c0c0c"/><rect x="5.5" y="13.6" width="4.5" height="1" fill="#fff"/><text x="5.2" y="10.6" font-family="Liberation Sans,sans-serif" font-weight="bold" font-size="5.6" fill="#fff">IJ</text></svg>
<span class="u" style="left:56px;top:9.66px;font-size:16px;line-height:20px;color:#bbbbbb;transform:scaleX(0.9497);transform-origin:0 0;"><span style="text-decoration:underline;text-underline-offset:2px">F</span>ile</span>
<span class="u" style="left:97.5px;top:9.66px;font-size:16px;line-height:20px;color:#bbbbbb;letter-spacing:0.141px;"><span style="text-decoration:underline;text-underline-offset:2px">E</span>dit</span>
<span class="u" style="left:141px;top:9.66px;font-size:16px;line-height:20px;color:#bbbbbb;letter-spacing:0.198px;"><span style="text-decoration:underline;text-underline-offset:2px">V</span>iew</span>
<span class="u" style="left:192px;top:9.66px;font-size:16px;line-height:20px;color:#bbbbbb;letter-spacing:0.335px;"><span style="text-decoration:underline;text-underline-offset:2px">N</span>avigate</span>
<span class="u" style="left:274px;top:9.66px;font-size:16px;line-height:20px;color:#bbbbbb;letter-spacing:0.078px;"><span style="text-decoration:underline;text-underline-offset:2px">C</span>ode</span>
<span class="u" style="left:327.5px;top:9.66px;font-size:16px;line-height:20px;color:#bbbbbb;letter-spacing:0.145px;"><span style="text-decoration:underline;text-underline-offset:2px">R</span>efactor</span>
<span class="u" style="left:405.5px;top:9.66px;font-size:16px;line-height:20px;color:#bbbbbb;letter-spacing:-0.020px;"><span style="text-decoration:underline;text-underline-offset:2px">B</span>uild</span>
<span class="u" style="left:458.5px;top:9.66px;font-size:16px;line-height:20px;color:#bbbbbb;transform:scaleX(0.9260);transform-origin:0 0;">R<span style="text-decoration:underline;text-underline-offset:2px">u</span>n</span>
<span class="u" style="left:501px;top:9.66px;font-size:16px;line-height:20px;color:#bbbbbb;letter-spacing:0.585px;"><span style="text-decoration:underline;text-underline-offset:2px">T</span>ools</span>
<span class="u" style="left:557.5px;top:9.66px;font-size:16px;line-height:20px;color:#bbbbbb;letter-spacing:0.373px;"><span style="text-decoration:underline;text-underline-offset:2px">G</span>it</span>
<span class="u" style="left:593.7px;top:9.66px;font-size:16px;line-height:20px;color:#bbbbbb;letter-spacing:0.616px;"><span style="text-decoration:underline;text-underline-offset:2px">W</span>indow</span>
<span class="u" style="left:670px;top:9.66px;font-size:16px;line-height:20px;color:#bbbbbb;letter-spacing:0.359px;"><span style="text-decoration:underline;text-underline-offset:2px">H</span>elp</span>
<span class="u" style="left:745px;top:9.66px;font-size:16px;line-height:20px;color:#8f9192;letter-spacing:0.380px;">xxl-job [D:\workspace\code\gitcode\xxl-job] - SampleXxlJob.java [xxl-job-executor-sample-springboot]</span>
<svg style="left:1610px;top:-20px;" width="62" height="62" viewBox="0 0 62 62"><defs><linearGradient id="bdg" x1="0" y1="0.3" x2="1" y2="0.7"><stop offset="0" stop-color="#74d0ea"/><stop offset="0.45" stop-color="#c3a8e8"/><stop offset="0.8" stop-color="#f2a2d0"/><stop offset="1" stop-color="#e0a6dc"/></linearGradient></defs><circle cx="31" cy="31" r="30" fill="url(#bdg)"/><circle cx="31" cy="31" r="24.5" fill="#7b7d7e"/><path d="M15.8 26.6 L25.4 32.6" stroke="#000" stroke-width="5.2" stroke-linecap="round"/><path d="M25.7 39.8 L25.7 46.4" stroke="#000" stroke-width="5.6" stroke-linecap="round"/><path d="M36.2 35.0 L36.2 46.2" stroke="#000" stroke-width="6.2" stroke-linecap="round"/><path d="M42.4 31.8 L46.8 27.2" stroke="#000" stroke-width="5.2" stroke-linecap="round"/><path d="M31.8 23.6 L41.0 20.2" stroke="#000" stroke-width="5" stroke-linecap="round"/><path d="M19.0 19.4 L26.6 21.4" stroke="#000" stroke-width="4" stroke-linecap="round"/></svg>
<div style="left:1749px;top:18px;width:12px;height:1px;background:#bdbdbd;"></div>
<div style="left:1808px;top:12px;width:12px;height:12px;background:transparent;box-sizing:border-box;border:1px solid #bdbdbd;"></div>
<svg style="left:1867px;top:12px;" width="13" height="13" viewBox="0 0 13 13"><path d="M0.5 0.5 L12.5 12.5 M12.5 0.5 L0.5 12.5" stroke="#bdbdbd" stroke-width="1.1"/></svg>
<span class="u" style="left:-107px;top:44.26px;font-size:16px;line-height:20px;color:#bbbbbb;font-weight:bold;letter-spacing:0.184px;">xxl-job-executor-sample-springboot</span>
<span class="u" style="left:193px;top:44.26px;font-size:16px;line-height:20px;color:#bbbbbb;letter-spacing:-0.164px;">src</span>
<span class="u" style="left:234px;top:44.26px;font-size:16px;line-height:20px;color:#bbbbbb;letter-spacing:-0.229px;">main</span>
<span class="u" style="left:288px;top:44.26px;font-size:16px;line-height:20px;color:#bbbbbb;letter-spacing:-0.286px;">java</span>
<span class="u" style="left:338px;top:44.26px;font-size:16px;line-height:20px;color:#bbbbbb;letter-spacing:0.383px;">com</span>
<span class="u" style="left:389.5px;top:44.26px;font-size:16px;line-height:20px;color:#bbbbbb;letter-spacing:0.219px;">xxl</span>
<span class="u" style="left:429.5px;top:44.26px;font-size:16px;line-height:20px;color:#bbbbbb;letter-spacing:1.070px;">job</span>
<span class="u" style="left:475.5px;top:44.26px;font-size:16px;line-height:20px;color:#bbbbbb;letter-spacing:0.375px;">executor</span>
<span class="u" style="left:560px;top:44.26px;font-size:16px;line-height:20px;color:#bbbbbb;letter-spacing:-0.031px;">service</span>
<span class="u" style="left:630.5px;top:44.26px;font-size:16px;line-height:20px;color:#bbbbbb;letter-spacing:0.474px;">jobhandler</span>
<svg style="left:176.5px;top:42.5px;" width="10" height="22" viewBox="0 0 10 22"><path d="M2 1 L8 11 L2 21" fill="none" stroke="#77797a" stroke-width="1.2"/></svg>
<svg style="left:217.5px;top:42.5px;" width="10" height="22" viewBox="0 0 10 22"><path d="M2 1 L8 11 L2 21" fill="none" stroke="#77797a" stroke-width="1.2"/></svg>
<svg style="left:272px;top:42.5px;" width="10" height="22" viewBox="0 0 10 22"><path d="M2 1 L8 11 L2 21" fill="none" stroke="#77797a" stroke-width="1.2"/></svg>
<svg style="left:320px;top:42.5px;" width="10" height="22" viewBox="0 0 10 22"><path d="M2 1 L8 11 L2 21" fill="none" stroke="#77797a" stroke-width="1.2"/></svg>
<svg style="left:373px;top:42.5px;" width="10" height="22" viewBox="0 0 10 22"><path d="M2 1 L8 11 L2 21" fill="none" stroke="#77797a" stroke-width="1.2"/></svg>
<svg style="left:415px;top:42.5px;" width="10" height="22" viewBox="0 0 10 22"><path d="M2 1 L8 11 L2 21" fill="none" stroke="#77797a" stroke-width="1.2"/></svg>
<svg style="left:460px;top:42.5px;" width="10" height="22" viewBox="0 0 10 22"><path d="M2 1 L8 11 L2 21" fill="none" stroke="#77797a" stroke-width="1.2"/></svg>
<svg style="left:544px;top:42.5px;" width="10" height="22" viewBox="0 0 10 22"><path d="M2 1 L8 11 L2 21" fill="none" stroke="#77797a" stroke-width="1.2"/></svg>
<svg style="left:615px;top:42.5px;" width="10" height="22" viewBox="0 0 10 22"><path d="M2 1 L8 11 L2 21" fill="none" stroke="#77797a" stroke-width="1.2"/></svg>
<svg style="left:715px;top:42.5px;" width="10" height="22" viewBox="0 0 10 22"><path d="M2 1 L8 11 L2 21" fill="none" stroke="#77797a" stroke-width="1.2"/></svg>
<svg style="left:858px;top:42.5px;" width="10" height="22" viewBox="0 0 10 22"><path d="M2 1 L8 11 L2 21" fill="none" stroke="#77797a" stroke-width="1.2"/></svg>
<svg style="left:727.9px;top:43.9px;" width="20" height="20" viewBox="0 0 16 16"><circle cx="8.1" cy="8" r="7" fill="#3181a8"/><text x="8.2" y="10.9" font-family="Liberation Sans,sans-serif" font-size="8.6" text-anchor="middle" fill="#1c3644">C</text></svg>
<span class="u" style="left:751px;top:44.26px;font-size:16px;line-height:20px;color:#bbbbbb;letter-spacing:-0.116px;">SampleXxlJob</span>
<svg style="left:870.4px;top:43.9px;" width="20" height="20" viewBox="0 0 16 16"><circle cx="8" cy="8" r="7" fill="#c4637a"/><text x="8" y="10.8" font-family="Liberation Sans,sans-serif" font-size="9.5" text-anchor="middle" fill="#4a2530">m</text></svg>
<span class="u" style="left:894px;top:44.26px;font-size:16px;line-height:20px;color:#bbbbbb;letter-spacing:0.372px;">demoJobHandler</span>
<svg style="left:1049px;top:45px;" width="20" height="17" viewBox="0 0 20 17"><circle cx="13.4" cy="4.4" r="3" fill="#9fa2a4"/><path d="M9.5 12 C9.5 9 11 7.6 13.4 7.6 C16 7.6 18.8 9.2 18.8 12 Z" fill="#9fa2a4"/><circle cx="8.6" cy="4.8" r="3.6" fill="#b9bbbd" stroke="#3c3f41" stroke-width="0.7"/><path d="M1 15.8 C1 11.4 4.4 9.6 8.6 9.6 C12.8 9.6 16.4 11.4 16.4 15.8 Z" fill="#b9bbbd" stroke="#3c3f41" stroke-width="0.7"/></svg>
<svg style="left:1071px;top:52.9px;" width="10" height="6" viewBox="0 0 10 6"><path d="M0 0 H10 L5 5.4 Z" fill="#afb1b3"/></svg>
<div style="left:1091px;top:42px;width:1px;height:24px;background:#5a5d5f;"></div>
<svg style="left:1102px;top:43px;" width="21" height="21" viewBox="0 0 21 21"><path d="M1.1 9.3 L12.1 2.2 L13.6 5 L2.9 12 Z" fill="#4fa355"/><path d="M5.6 7.9 L8.9 5.4 L20.4 15.6 L17.6 18.8 Z" fill="#4fa355"/></svg>
<div style="left:1136px;top:40px;width:265px;height:27px;background:transparent;box-sizing:border-box;border:1px solid #646769;border-radius:4px;"></div>
<svg style="left:1148.5px;top:45.0px;" width="20" height="20" viewBox="0 0 16 16"><path d="M1.2 13.2 C0.4 9 3 5.3 8 5.1 C11 5 13.2 4.2 14.4 2.3 C15.7 5.5 15.3 9.5 13 12 C10.5 14.7 6 15 3.6 13.5 C3 14 2 14 1.2 13.2 Z" fill="#5c9f49"/><polygon points="7.25,11.65 9.55,7.25 14.15,7.25 16.45,11.65 14.15,16.05 9.55,16.05" fill="#aab3ba" stroke="#3c3f41" stroke-width="0.9"/><path d="M10.55 9.95 A2.3 2.3 0 1 0 13.15 9.95" fill="none" stroke="#43474a" stroke-width="0.9"/><rect x="11.40" y="8.55" width="0.9" height="2.9" fill="#43474a"/><circle cx="13.1" cy="13.6" r="2.2" fill="#1fd61f"/></svg>
<span class="u" style="left:1173px;top:44.26px;font-size:16px;line-height:20px;color:#bbbbbb;letter-spacing:0.232px;">XxlJobExecutorApplication</span>
<svg style="left:1378.5px;top:50px;" width="11" height="7" viewBox="0 0 11 7"><path d="M0 0 H10.5 L5.25 6.5 Z" fill="#afb1b3"/></svg>
<svg style="left:1415px;top:43.5px;" width="21" height="21" viewBox="0 0 21 21"><path d="M9.8 17.6 H8.7 A5.6 5.6 0 0 1 8.7 6.4 H11.5" fill="none" stroke="#4fa355" stroke-width="2.6"/><path d="M11.3 1.8 L18.3 6.5 L11.3 11.1 Z" fill="#4fa355"/><rect x="9.9" y="13" width="6.6" height="6.4" fill="#c4c6c7"/></svg>
<svg style="left:1446px;top:43.5px;" width="20" height="21" viewBox="0 0 20 21"><ellipse cx="10" cy="12" rx="5" ry="7.2" fill="#4fa355"/><path d="M5 2.5 L7.8 5.6 M15 2.5 L12.2 5.6" stroke="#4fa355" stroke-width="1.6"/><path d="M2.6 8 H6 M14 8 H17.4 M2.2 12.2 H6 M14 12.2 H17.8 M2.6 16.4 H6 M14 16.4 H17.4" stroke="#4fa355" stroke-width="2.1"/><path d="M6.5 10.4 H13.5 M6.5 14 H13.5" stroke="#3c3f41" stroke-width="1.3"/></svg>
<svg style="left:1479px;top:44px;" width="21" height="21" viewBox="0 0 21 21"><path d="M1 2 L7.5 1 L14 2 V9.5 C14 14 10 16.5 7.5 17.5 C5 16.5 1 14 1 9.5 Z" fill="#9da0a2"/><path d="M1 2 L7.5 1 V17.5 C5 16.5 1 14 1 9.5 Z" fill="#c4c6c7"/><path d="M10 8 L20.4 14.2 L10 20.4 Z" fill="#4fa355" stroke="#3c3f41" stroke-width="1.4"/></svg>
<svg style="left:1509px;top:44px;" width="21" height="21" viewBox="0 0 21 21"><circle cx="8.5" cy="9.2" r="7.3" fill="none" stroke="#afb1b3" stroke-width="1.9"/><path d="M8.5 4.6 V9.2 L5.6 11.8" fill="none" stroke="#afb1b3" stroke-width="1.6"/><path d="M10.5 8 L20.9 14.2 L10.5 20.4 Z" fill="#4fa355" stroke="#3c3f41" stroke-width="1.4"/></svg>
<svg style="left:1538px;top:52.6px;" width="10" height="6" viewBox="0 0 10 6"><path d="M0 0 H9.8 L4.9 5.5 Z" fill="#afb1b3"/></svg>
<div style="left:1561.7px;top:47.8px;width:12.5px;height:12.4px;background:#c75450;"></div>
<div style="left:1588px;top:42px;width:1px;height:24px;background:#5a5d5f;"></div>
<span class="u" style="left:1600.8px;top:44.26px;font-size:16px;line-height:20px;color:#bbbbbb;letter-spacing:-0.230px;">Git:</span>
<svg style="left:1639px;top:45px;" width="18" height="18" viewBox="0 0 18 18"><path d="M15.8 2.6 L6 12.2" stroke="#3592c4" stroke-width="2.6"/><path d="M2.6 5.8 V15 H12 Z" fill="#3592c4"/></svg>
<svg style="left:1671px;top:45px;" width="19" height="18" viewBox="0 0 19 18"><path d="M2 9.8 L7.6 14.5 L17.9 2.6" fill="none" stroke="#4fa355" stroke-width="2.7"/></svg>
<svg style="left:1703px;top:45px;" width="18" height="18" viewBox="0 0 18 18"><path d="M3 15.3 L12.6 5.8" stroke="#4fa355" stroke-width="2.6"/><path d="M7 2.6 H16.4 V11.8 Z" fill="#4fa355"/></svg>
<svg style="left:1734.4px;top:43.5px;" width="21" height="21" viewBox="0 0 21 21"><circle cx="10.5" cy="10.5" r="8.2" fill="none" stroke="#afb1b3" stroke-width="2"/><path d="M10.5 5.4 V10.8 L14 13" fill="none" stroke="#afb1b3" stroke-width="1.9"/></svg>
<svg style="left:1769px;top:43px;" width="21" height="21" viewBox="0 0 21 21"><path d="M6 8.1 H12.7 A5 5 0 0 1 12.7 18.1 H5.6" fill="none" stroke="#afb1b3" stroke-width="2.1"/><path d="M1.4 8.1 L7.4 3 V13.2 Z" fill="#afb1b3"/></svg>
<div style="left:1798px;top:42px;width:1px;height:24px;background:#5a5d5f;"></div>
<svg style="left:1808px;top:43px;" width="21" height="21" viewBox="0 0 21 21"><circle cx="8.7" cy="9.9" r="5.6" fill="none" stroke="#afb1b3" stroke-width="2.4"/><path d="M12.8 14 L18.6 19.2" stroke="#afb1b3" stroke-width="3"/></svg>
<svg style="left:1840.5px;top:44px;" width="20" height="20" viewBox="0 0 20 20"><g transform="translate(10,10)"><path d="M-1.74,-5.64 L-1.49,-7.76 L1.49,-7.76 L1.74,-5.64 L4.01,-4.33 L5.97,-5.17 L7.46,-2.59 L5.75,-1.31 L5.75,1.31 L7.46,2.59 L5.97,5.17 L4.01,4.33 L1.74,5.64 L1.49,7.76 L-1.49,7.76 L-1.74,5.64 L-4.01,4.33 L-5.97,5.17 L-7.46,2.59 L-5.75,1.31 L-5.75,-1.31 L-7.46,-2.59 L-5.97,-5.17 L-4.01,-4.33 Z M3.2 0 A3.2 3.2 0 1 0 -3.2 0 A3.2 3.2 0 1 0 3.2 0 Z" fill="#afb1b3" fill-rule="evenodd" stroke="#afb1b3" stroke-width="0.6" stroke-linejoin="round"/></g></svg>
<svg style="left:1875.4px;top:44.6px;" width="18" height="19" viewBox="0 0 18 19"><defs><linearGradient id="tb1" x1="0" y1="0" x2="0" y2="1"><stop offset="0" stop-color="#f4f345"/><stop offset="0.5" stop-color="#9fe18b"/><stop offset="1" stop-color="#2bd0e4"/></linearGradient><linearGradient id="tb2" x1="0" y1="0" x2="1" y2="0.4"><stop offset="0" stop-color="#58dc62"/><stop offset="0.5" stop-color="#24bfa6"/><stop offset="1" stop-color="#1b86e8"/></linearGradient><linearGradient id="tb3" x1="0" y1="1" x2="1" y2="0"><stop offset="0" stop-color="#189fe8"/><stop offset="0.6" stop-color="#1a6ad0"/><stop offset="1" stop-color="#1c4cbc"/></linearGradient></defs><path d="M1.5 0.7 Q11.7 0.2 17.5 8.1 L10.5 8.3 Z" fill="url(#tb2)"/><path d="M3.1 18.1 Q12.3 17.3 17.5 8.1 L10.5 8.3 Z" fill="url(#tb3)"/><path d="M1.5 0.7 Q-2.9 9 3.1 18.1 L10.5 8.3 Z" fill="url(#tb1)"/></svg>
<div style="left:0px;top:957px;width:1902px;height:28px;background:#3c3f41;"></div>
<div style="left:0px;top:956.5px;width:1902px;height:1px;background:#323232;"></div>
<div style="left:570px;top:957px;width:96px;height:28px;background:#2d2f30;"></div>
<svg style="left:41px;top:964px;" width="14" height="17" viewBox="0 0 14 17"><circle cx="3.5" cy="3" r="2.2" fill="#afb1b3"/><circle cx="3.5" cy="14" r="2.2" fill="#afb1b3"/><circle cx="10.5" cy="5.5" r="2.2" fill="#afb1b3"/><path d="M3.5 3 V14 M3.5 11.5 C3.5 8.5 10.5 9.5 10.5 5.5" fill="none" stroke="#afb1b3" stroke-width="1.8"/></svg>
<span class="u" style="left:61px;top:963.52px;font-size:13.8px;line-height:20px;color:#bbbbbb;letter-spacing:0.180px;">Git</span>
<svg style="left:103px;top:966px;" width="14" height="13" viewBox="0 0 14 13"><g fill="#afb1b3"><rect x="0" y="0.5" width="2.5" height="2.5"/><rect x="4" y="0.5" width="10" height="2.5"/><rect x="0" y="5" width="2.5" height="2.5"/><rect x="4" y="5" width="10" height="2.5"/><rect x="0" y="9.5" width="2.5" height="2.5"/><rect x="4" y="9.5" width="10" height="2.5"/></g></svg>
<span class="u" style="left:123px;top:963.52px;font-size:13.8px;line-height:20px;color:#bbbbbb;letter-spacing:-0.336px;">TODO</span>
<svg style="left:187px;top:964.5px;" width="15" height="15" viewBox="0 0 15 15"><circle cx="7.5" cy="7.5" r="7" fill="#afb1b3"/><rect x="6.5" y="3" width="2" height="6" fill="#3c3f41"/><rect x="6.5" y="10.3" width="2" height="2" fill="#3c3f41"/></svg>
<span class="u" style="left:208.4px;top:963.52px;font-size:13.8px;line-height:20px;color:#bbbbbb;letter-spacing:-0.312px;">Problems</span>
<svg style="left:289.5px;top:964px;" width="17" height="15" viewBox="0 0 17 15"><path d="M1 10 C1 5 5 3.6 9.5 3.6 C12 3.6 14 2.6 15.2 0.8 C16.6 5 16 9 13.4 11.4 C10.6 14 6 14 3.6 12.2 C3 13 2.2 13.6 1 13.6 Z" fill="#afb1b3"/></svg>
<span class="u" style="left:311.3px;top:963.52px;font-size:13.8px;line-height:20px;color:#bbbbbb;letter-spacing:-0.138px;">Spring</span>
<svg style="left:377px;top:965px;" width="15" height="14" viewBox="0 0 15 14"><rect x="0" y="0" width="15" height="14" fill="#afb1b3"/><path d="M2.5 3 L6.5 6.5 L2.5 10" fill="none" stroke="#3c3f41" stroke-width="1.6"/><rect x="7.5" y="9.5" width="5" height="1.6" fill="#3c3f41"/></svg>
<span class="u" style="left:398px;top:963.52px;font-size:13.8px;line-height:20px;color:#bbbbbb;letter-spacing:-0.020px;">Terminal</span>
<svg style="left:474px;top:962.5px;" width="19" height="20" viewBox="0 0 19 20"><path d="M1.1 7.7 L3.8 14.8 L11.3 3.3 L15 14.8 L17.9 8" fill="none" stroke="#afb1b3" stroke-width="1.5" stroke-linejoin="round"/><circle cx="11.3" cy="3.4" r="3.3" fill="#afb1b3"/><circle cx="3.9" cy="14.9" r="3.3" fill="#afb1b3"/><circle cx="15" cy="14.9" r="3.3" fill="#afb1b3"/></svg>
<span class="u" style="left:496.3px;top:963.52px;font-size:13.8px;line-height:20px;color:#bbbbbb;letter-spacing:-0.109px;">Endpoints</span>
<svg style="left:584px;top:963.5px;" width="18" height="18" viewBox="0 0 18 18"><path d="M1 2.5 H10 A6 6 0 0 1 16 8.5 A6 6 0 0 1 10 14.5 H4 A3 3 0 0 1 1 11.5 Z" fill="#c7c9ca"/><path d="M6 5 L11.5 8.5 L6 12 Z" fill="#2d2f30"/><circle cx="14.5" cy="14.5" r="2.6" fill="#2fe04a"/></svg>
<span class="u" style="left:605.5px;top:963.52px;font-size:13.8px;line-height:20px;color:#ffffff;transform:scaleX(0.9299);transform-origin:0 0;">Services</span>
<svg style="left:684px;top:963px;" width="20" height="18" viewBox="0 0 20 18"><path d="M7 2.5 H13 V16.5 H7 Z" fill="none" stroke="#afb1b3" stroke-width="1.6"/><path d="M0 4 H4 M2.2 2 L4.2 4 L2.2 6" fill="none" stroke="#afb1b3" stroke-width="1.1"/><path d="M14.5 14.5 H19 M17 12.5 L19 14.5 L17 16.5" fill="none" stroke="#afb1b3" stroke-width="1.1"/></svg>
<span class="u" style="left:709.5px;top:963.52px;font-size:13.8px;line-height:20px;color:#bbbbbb;letter-spacing:-0.207px;">Sequence Diagram</span>
<svg style="left:851px;top:963.5px;" width="18" height="18" viewBox="0 0 18 18"><path d="M13.5 7.5 A6.3 6.3 0 1 0 7.5 14" fill="none" stroke="#afb1b3" stroke-width="1.7"/><path d="M7.5 4 V8 L5 10" fill="none" stroke="#afb1b3" stroke-width="1.5"/><path d="M9.5 8 L17.5 12.7 L9.5 17.5 Z" fill="#afb1b3"/></svg>
<span class="u" style="left:874px;top:963.52px;font-size:13.8px;line-height:20px;color:#bbbbbb;letter-spacing:-0.015px;">Profiler</span>
<svg style="left:941px;top:963px;" width="18" height="18" viewBox="0 0 18 18"><g transform="rotate(-40 9 9)"><rect x="3" y="2.5" width="12" height="4.8" rx="0.8" fill="#afb1b3"/><rect x="7.7" y="7.3" width="2.6" height="10.5" fill="#afb1b3"/></g></svg>
<span class="u" style="left:964.4px;top:963.52px;font-size:13.8px;line-height:20px;color:#bbbbbb;transform:scaleX(0.9483);transform-origin:0 0;">Build</span>
<svg style="left:1020px;top:964px;" width="17" height="16" viewBox="0 0 17 16"><path d="M8.5 0.5 L16 4.2 L8.5 8 L1 4.2 Z" fill="#afb1b3"/><path d="M1 8 L8.5 11.8 L16 8 M1 11.6 L8.5 15.4 L16 11.6" fill="none" stroke="#afb1b3" stroke-width="1.7"/></svg>
<span class="u" style="left:1041.3px;top:963.52px;font-size:13.8px;line-height:20px;color:#bbbbbb;letter-spacing:-0.247px;">Dependencies</span>
<div style="left:0px;top:985px;width:1902px;height:26px;background:#3c3f41;"></div>
<div style="left:0px;top:985px;width:1902px;height:1px;background:#323232;"></div>
<svg style="left:6px;top:990px;" width="18" height="18" viewBox="0 0 18 18"><rect x="4.5" y="1" width="12" height="12" fill="none" stroke="#afb1b3" stroke-width="1.3"/><path d="M1.5 4 V16 H13.5" fill="none" stroke="#afb1b3" stroke-width="1.3"/></svg>
<span class="u" style="left:34.2px;top:989.56px;font-size:16px;line-height:20px;color:#bbbbbb;letter-spacing:0.041px;">Build completed successfully in 3 sec, 871 ms (a minute ago)</span>
<span class="u" style="left:1555.5px;top:989.56px;font-size:16px;line-height:20px;color:#bbbbbb;letter-spacing:-0.314px;">36:8</span>
<span class="u" style="left:1601.5px;top:989.56px;font-size:16px;line-height:20px;color:#bbbbbb;transform:scaleX(0.8377);transform-origin:0 0;">CRLF</span>
<span class="u" style="left:1653px;top:989.56px;font-size:16px;line-height:20px;color:#bbbbbb;transform:scaleX(0.9420);transform-origin:0 0;">UTF-8</span>
<span class="u" style="left:1710px;top:989.56px;font-size:16px;line-height:20px;color:#bbbbbb;transform:scaleX(0.9602);transform-origin:0 0;">4 spaces</span>
<svg style="left:1789px;top:990px;" width="14" height="18" viewBox="0 0 14 18"><circle cx="3.5" cy="3" r="2.2" fill="#afb1b3"/><circle cx="3.5" cy="15" r="2.2" fill="#afb1b3"/><circle cx="10.5" cy="5.5" r="2.2" fill="#afb1b3"/><path d="M3.5 3 V15 M3.5 12 C3.5 9 10.5 9.5 10.5 5.5" fill="none" stroke="#afb1b3" stroke-width="1.8"/></svg>
<span class="u" style="left:1809.4px;top:989.56px;font-size:16px;line-height:20px;color:#bbbbbb;letter-spacing:0.019px;">master</span>
<svg style="left:1870px;top:990px;" width="16" height="16" viewBox="0 0 16 16"><rect x="4" y="7" width="11" height="8" fill="#afb1b3"/><path d="M2 8 V4.5 A3 3 0 0 1 8 4.5 V7" fill="none" stroke="#afb1b3" stroke-width="1.6"/></svg>
<svg style="left:0px;top:0px;" width="8" height="8" viewBox="0 0 8 8"><path d="M0 0 H8 A8 8 0 0 0 0 8 Z" fill="#1e1e1e"/></svg>
<svg style="left:1894px;top:0px;" width="8" height="8" viewBox="0 0 8 8"><path d="M8 0 H0 A8 8 0 0 1 8 8 Z" fill="#1e1e1e"/></svg>
<svg style="left:0px;top:1003px;" width="8" height="8" viewBox="0 0 8 8"><path d="M0 8 H8 A8 8 0 0 1 0 0 Z" fill="#1e1e1e"/></svg>
<svg style="left:1894px;top:1003px;" width="8" height="8" viewBox="0 0 8 8"><path d="M8 8 H0 A8 8 0 0 0 8 0 Z" fill="#1e1e1e"/></svg>
</body></html>
